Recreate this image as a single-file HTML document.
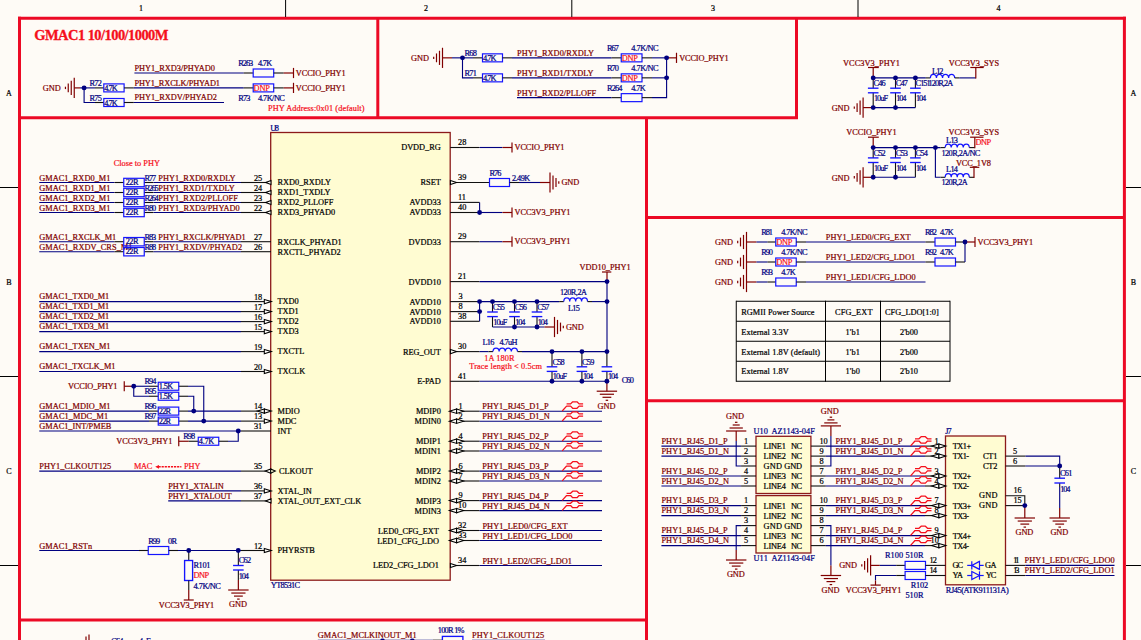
<!DOCTYPE html>
<html><head><meta charset="utf-8"><title>GMAC1 10/100/1000M schematic</title>
<style>
html,body{margin:0;padding:0;background:#fefbf6;}
body{width:1141px;height:640px;overflow:hidden;}
svg{display:block;font-family:"Liberation Serif",serif;font-size:8.3px;}
text{white-space:pre;}
</style></head><body>
<svg width="1141" height="640" viewBox="0 0 1141 640">
<rect x="0" y="0" width="1141" height="640" fill="#fefbf6"/>
<polyline points="18,18.3 1125.9,18.3" fill="none" stroke="#ec0a25" stroke-width="3" stroke-linecap="butt" stroke-linejoin="miter"/>
<polyline points="19.5,16.8 19.5,640" fill="none" stroke="#ec0a25" stroke-width="3" stroke-linecap="butt" stroke-linejoin="miter"/>
<polyline points="1124.4,16.8 1124.4,640" fill="none" stroke="#ec0a25" stroke-width="3" stroke-linecap="butt" stroke-linejoin="miter"/>
<polyline points="19.5,117.7 798,117.7" fill="none" stroke="#ec0a25" stroke-width="3" stroke-linecap="butt" stroke-linejoin="miter"/>
<polyline points="377.8,18.3 377.8,117.7" fill="none" stroke="#ec0a25" stroke-width="3" stroke-linecap="butt" stroke-linejoin="miter"/>
<polyline points="796.5,18.3 796.5,117.7" fill="none" stroke="#ec0a25" stroke-width="3" stroke-linecap="butt" stroke-linejoin="miter"/>
<polyline points="646.5,117.7 646.5,640" fill="none" stroke="#ec0a25" stroke-width="3" stroke-linecap="butt" stroke-linejoin="miter"/>
<polyline points="646.5,217.5 1124.4,217.5" fill="none" stroke="#ec0a25" stroke-width="3" stroke-linecap="butt" stroke-linejoin="miter"/>
<polyline points="646.5,400.8 1124.4,400.8" fill="none" stroke="#ec0a25" stroke-width="3" stroke-linecap="butt" stroke-linejoin="miter"/>
<polyline points="19.5,620 646.5,620" fill="none" stroke="#ec0a25" stroke-width="3" stroke-linecap="butt" stroke-linejoin="miter"/>
<polyline points="285.6,0 285.6,17" fill="none" stroke="#000000" stroke-width="1" stroke-linecap="butt" stroke-linejoin="miter"/>
<polyline points="571.8,0 571.8,17" fill="none" stroke="#000000" stroke-width="1" stroke-linecap="butt" stroke-linejoin="miter"/>
<polyline points="858,0 858,17" fill="none" stroke="#000000" stroke-width="1" stroke-linecap="butt" stroke-linejoin="miter"/>
<polyline points="0,187.5 18,187.5" fill="none" stroke="#000000" stroke-width="1" stroke-linecap="butt" stroke-linejoin="miter"/>
<polyline points="1126,187.5 1141,187.5" fill="none" stroke="#000000" stroke-width="1" stroke-linecap="butt" stroke-linejoin="miter"/>
<polyline points="0,376.5 18,376.5" fill="none" stroke="#000000" stroke-width="1" stroke-linecap="butt" stroke-linejoin="miter"/>
<polyline points="1126,376.5 1141,376.5" fill="none" stroke="#000000" stroke-width="1" stroke-linecap="butt" stroke-linejoin="miter"/>
<polyline points="0,565.5 18,565.5" fill="none" stroke="#000000" stroke-width="1" stroke-linecap="butt" stroke-linejoin="miter"/>
<polyline points="1126,565.5 1141,565.5" fill="none" stroke="#000000" stroke-width="1" stroke-linecap="butt" stroke-linejoin="miter"/>
<text x="141" y="11" fill="#000000" stroke="#000000" stroke-width="0.22" text-anchor="middle" font-size="8">1</text>
<text x="426" y="11" fill="#000000" stroke="#000000" stroke-width="0.22" text-anchor="middle" font-size="8">2</text>
<text x="713" y="11" fill="#000000" stroke="#000000" stroke-width="0.22" text-anchor="middle" font-size="8">3</text>
<text x="998.5" y="11" fill="#000000" stroke="#000000" stroke-width="0.22" text-anchor="middle" font-size="8">4</text>
<text x="9" y="96.3" fill="#000000" stroke="#000000" stroke-width="0.22" text-anchor="middle" font-size="8">A</text>
<text x="1133.5" y="96.3" fill="#000000" stroke="#000000" stroke-width="0.22" text-anchor="middle" font-size="8">A</text>
<text x="9" y="285" fill="#000000" stroke="#000000" stroke-width="0.22" text-anchor="middle" font-size="8">B</text>
<text x="1133.5" y="285" fill="#000000" stroke="#000000" stroke-width="0.22" text-anchor="middle" font-size="8">B</text>
<text x="9" y="474" fill="#000000" stroke="#000000" stroke-width="0.22" text-anchor="middle" font-size="8">C</text>
<text x="1133.5" y="474" fill="#000000" stroke="#000000" stroke-width="0.22" text-anchor="middle" font-size="8">C</text>
<text x="34.2" y="39.9" fill="#f5101c" stroke="#f5101c" stroke-width="0.3" textLength="134.3" lengthAdjust="spacing" font-weight="bold" font-size="14.5">GMAC1 10/100/1000M</text>
<text x="134.4" y="71" fill="#800000" stroke="#800000" stroke-width="0.22" textLength="80.6" lengthAdjust="spacing">PHY1_RXD3/PHYAD0</text>
<polyline points="134.4,73 243.7,73" fill="none" stroke="#000080" stroke-width="1.12" stroke-linecap="butt" stroke-linejoin="miter"/>
<polyline points="243.7,73 253.2,73" fill="none" stroke="#101010" stroke-width="1.1" stroke-linecap="butt" stroke-linejoin="miter"/>
<rect x="253.2" y="69" width="20.5" height="8" fill="none" stroke="#1414ff" stroke-width="1.2"/>
<polyline points="273.7,73 283.7,73" fill="none" stroke="#101010" stroke-width="1.1" stroke-linecap="butt" stroke-linejoin="miter"/>
<polyline points="283.7,73 293.5,73" fill="none" stroke="#800000" stroke-width="1.2" stroke-linecap="butt" stroke-linejoin="miter"/>
<polyline points="293.5,67.9 293.5,78.1" fill="none" stroke="#800000" stroke-width="1.2" stroke-linecap="butt" stroke-linejoin="miter"/>
<text x="295.8" y="75.6" fill="#800000" stroke="#800000" stroke-width="0.22" textLength="49.8" lengthAdjust="spacing">VCCIO_PHY1</text>
<text x="238.2" y="65.6" fill="#000080" stroke="#000080" stroke-width="0.22" textLength="15" lengthAdjust="spacing">R263</text>
<text x="257.9" y="65.6" fill="#000080" stroke="#000080" stroke-width="0.22" textLength="14.4" lengthAdjust="spacing">4.7K</text>
<polyline points="74.25,77.8 74.25,98" fill="none" stroke="#800000" stroke-width="1.2" stroke-linecap="butt" stroke-linejoin="miter"/>
<polyline points="71.25,80.8 71.25,95" fill="none" stroke="#800000" stroke-width="1.2" stroke-linecap="butt" stroke-linejoin="miter"/>
<polyline points="68.25,83.5 68.25,92.3" fill="none" stroke="#800000" stroke-width="1.2" stroke-linecap="butt" stroke-linejoin="miter"/>
<polyline points="65.45,86.7 65.45,89.1" fill="none" stroke="#800000" stroke-width="1.2" stroke-linecap="butt" stroke-linejoin="miter"/>
<text x="42.85" y="90.7" fill="#800000" stroke="#800000" stroke-width="0.22" textLength="17.8" lengthAdjust="spacing">GND</text>
<polyline points="74.25,87.9 80,87.9" fill="none" stroke="#800000" stroke-width="1.2" stroke-linecap="butt" stroke-linejoin="miter"/>
<polyline points="80,87.9 95,87.9" fill="none" stroke="#000080" stroke-width="1.12" stroke-linecap="butt" stroke-linejoin="miter"/>
<polyline points="95,87.9 103.8,87.9" fill="none" stroke="#101010" stroke-width="1.1" stroke-linecap="butt" stroke-linejoin="miter"/>
<rect x="103.8" y="83.9" width="20.3" height="8" fill="none" stroke="#1414ff" stroke-width="1.2"/>
<text x="104.3" y="91.1" fill="#000080" stroke="#000080" stroke-width="0.22" textLength="13.4" lengthAdjust="spacing">4.7K</text>
<polyline points="124.1,87.9 133.8,87.9" fill="none" stroke="#101010" stroke-width="1.1" stroke-linecap="butt" stroke-linejoin="miter"/>
<polyline points="133.8,87.9 243.7,87.9" fill="none" stroke="#000080" stroke-width="1.12" stroke-linecap="butt" stroke-linejoin="miter"/>
<polyline points="243.7,87.9 253.2,87.9" fill="none" stroke="#101010" stroke-width="1.1" stroke-linecap="butt" stroke-linejoin="miter"/>
<rect x="253.2" y="83.9" width="20.5" height="8" fill="none" stroke="#1414ff" stroke-width="1.2"/>
<text x="253.6" y="91.1" fill="#f5101c" stroke="#f5101c" stroke-width="0.22" textLength="16.2" lengthAdjust="spacing">DNP</text>
<polyline points="273.7,87.9 283.7,87.9" fill="none" stroke="#101010" stroke-width="1.1" stroke-linecap="butt" stroke-linejoin="miter"/>
<polyline points="283.7,87.9 293.5,87.9" fill="none" stroke="#800000" stroke-width="1.2" stroke-linecap="butt" stroke-linejoin="miter"/>
<polyline points="293.5,82.8 293.5,93" fill="none" stroke="#800000" stroke-width="1.2" stroke-linecap="butt" stroke-linejoin="miter"/>
<text x="295.8" y="90.5" fill="#800000" stroke="#800000" stroke-width="0.22" textLength="49.8" lengthAdjust="spacing">VCCIO_PHY1</text>
<text x="89.4" y="86" fill="#000080" stroke="#000080" stroke-width="0.22" textLength="12.5" lengthAdjust="spacing">R72</text>
<text x="134.4" y="86" fill="#800000" stroke="#800000" stroke-width="0.22" textLength="85.6" lengthAdjust="spacing">PHY1_RXCLK/PHYAD1</text>
<polyline points="84.1,87.9 84.1,102.5 95,102.5" fill="none" stroke="#000080" stroke-width="1.12" stroke-linecap="butt" stroke-linejoin="miter"/>
<polyline points="95,102.5 103.8,102.5" fill="none" stroke="#101010" stroke-width="1.1" stroke-linecap="butt" stroke-linejoin="miter"/>
<rect x="103.8" y="98.5" width="20.3" height="8" fill="none" stroke="#1414ff" stroke-width="1.2"/>
<text x="104.3" y="105.7" fill="#000080" stroke="#000080" stroke-width="0.22" textLength="13.4" lengthAdjust="spacing">4.7K</text>
<polyline points="124.1,102.5 133.8,102.5" fill="none" stroke="#101010" stroke-width="1.1" stroke-linecap="butt" stroke-linejoin="miter"/>
<polyline points="133.8,102.5 224,102.5" fill="none" stroke="#000080" stroke-width="1.12" stroke-linecap="butt" stroke-linejoin="miter"/>
<text x="89.4" y="100.6" fill="#000080" stroke="#000080" stroke-width="0.22" textLength="12.5" lengthAdjust="spacing">R75</text>
<text x="134.4" y="100.4" fill="#800000" stroke="#800000" stroke-width="0.22" textLength="82.4" lengthAdjust="spacing">PHY1_RXDV/PHYAD2</text>
<text x="238.2" y="101" fill="#000080" stroke="#000080" stroke-width="0.22" textLength="12.3" lengthAdjust="spacing">R73</text>
<text x="257.9" y="101" fill="#000080" stroke="#000080" stroke-width="0.22" textLength="27" lengthAdjust="spacing">4.7K/NC</text>
<text x="268" y="110.6" fill="#f5101c" stroke="#f5101c" stroke-width="0.22" textLength="96.5" lengthAdjust="spacing">PHY Address:0x01 (default)</text>
<polyline points="442.5,47.75 442.5,67.95" fill="none" stroke="#800000" stroke-width="1.2" stroke-linecap="butt" stroke-linejoin="miter"/>
<polyline points="439.5,50.75 439.5,64.95" fill="none" stroke="#800000" stroke-width="1.2" stroke-linecap="butt" stroke-linejoin="miter"/>
<polyline points="436.5,53.45 436.5,62.25" fill="none" stroke="#800000" stroke-width="1.2" stroke-linecap="butt" stroke-linejoin="miter"/>
<polyline points="433.7,56.65 433.7,59.05" fill="none" stroke="#800000" stroke-width="1.2" stroke-linecap="butt" stroke-linejoin="miter"/>
<text x="411.1" y="60.65" fill="#800000" stroke="#800000" stroke-width="0.22" textLength="17.8" lengthAdjust="spacing">GND</text>
<polyline points="442.5,57.85 452,57.85" fill="none" stroke="#800000" stroke-width="1.2" stroke-linecap="butt" stroke-linejoin="miter"/>
<polyline points="452,57.85 473,57.85" fill="none" stroke="#000080" stroke-width="1.12" stroke-linecap="butt" stroke-linejoin="miter"/>
<polyline points="473,57.85 482.5,57.85" fill="none" stroke="#101010" stroke-width="1.1" stroke-linecap="butt" stroke-linejoin="miter"/>
<rect x="482.5" y="53.85" width="20" height="8" fill="none" stroke="#1414ff" stroke-width="1.2"/>
<text x="483" y="61.05" fill="#000080" stroke="#000080" stroke-width="0.22" textLength="13.4" lengthAdjust="spacing">4.7K</text>
<polyline points="502.5,57.85 512,57.85" fill="none" stroke="#101010" stroke-width="1.1" stroke-linecap="butt" stroke-linejoin="miter"/>
<polyline points="512,57.85 611.6,57.85" fill="none" stroke="#000080" stroke-width="1.12" stroke-linecap="butt" stroke-linejoin="miter"/>
<polyline points="611.6,57.85 621.25,57.85" fill="none" stroke="#101010" stroke-width="1.1" stroke-linecap="butt" stroke-linejoin="miter"/>
<rect x="621.25" y="53.85" width="20.75" height="8" fill="none" stroke="#1414ff" stroke-width="1.2"/>
<text x="621.65" y="61.05" fill="#f5101c" stroke="#f5101c" stroke-width="0.22" textLength="16.2" lengthAdjust="spacing">DNP</text>
<polyline points="642,57.85 652,57.85" fill="none" stroke="#101010" stroke-width="1.1" stroke-linecap="butt" stroke-linejoin="miter"/>
<polyline points="652,57.85 666.6,57.85" fill="none" stroke="#000080" stroke-width="1.12" stroke-linecap="butt" stroke-linejoin="miter"/>
<text x="464.5" y="55.9" fill="#000080" stroke="#000080" stroke-width="0.22" textLength="12.5" lengthAdjust="spacing">R68</text>
<polyline points="473,77.85 482.5,77.85" fill="none" stroke="#101010" stroke-width="1.1" stroke-linecap="butt" stroke-linejoin="miter"/>
<rect x="482.5" y="73.85" width="20" height="8" fill="none" stroke="#1414ff" stroke-width="1.2"/>
<text x="483" y="81.05" fill="#000080" stroke="#000080" stroke-width="0.22" textLength="13.4" lengthAdjust="spacing">4.7K</text>
<polyline points="502.5,77.85 512,77.85" fill="none" stroke="#101010" stroke-width="1.1" stroke-linecap="butt" stroke-linejoin="miter"/>
<polyline points="512,77.85 611.6,77.85" fill="none" stroke="#000080" stroke-width="1.12" stroke-linecap="butt" stroke-linejoin="miter"/>
<polyline points="611.6,77.85 621.25,77.85" fill="none" stroke="#101010" stroke-width="1.1" stroke-linecap="butt" stroke-linejoin="miter"/>
<rect x="621.25" y="73.85" width="20.75" height="8" fill="none" stroke="#1414ff" stroke-width="1.2"/>
<text x="621.65" y="81.05" fill="#f5101c" stroke="#f5101c" stroke-width="0.22" textLength="16.2" lengthAdjust="spacing">DNP</text>
<polyline points="642,77.85 652,77.85" fill="none" stroke="#101010" stroke-width="1.1" stroke-linecap="butt" stroke-linejoin="miter"/>
<polyline points="652,77.85 666.6,77.85" fill="none" stroke="#000080" stroke-width="1.12" stroke-linecap="butt" stroke-linejoin="miter"/>
<text x="464.5" y="75.9" fill="#000080" stroke="#000080" stroke-width="0.22" textLength="12.5" lengthAdjust="spacing">R71</text>
<polyline points="462.5,57.85 462.5,77.85 473,77.85" fill="none" stroke="#000080" stroke-width="1.12" stroke-linecap="butt" stroke-linejoin="miter"/>
<polyline points="517,97.65 611.6,97.65" fill="none" stroke="#000080" stroke-width="1.12" stroke-linecap="butt" stroke-linejoin="miter"/>
<polyline points="611.6,97.65 621.25,97.65" fill="none" stroke="#101010" stroke-width="1.1" stroke-linecap="butt" stroke-linejoin="miter"/>
<rect x="621.25" y="93.65" width="20.75" height="8" fill="none" stroke="#1414ff" stroke-width="1.2"/>
<polyline points="642,97.65 652,97.65" fill="none" stroke="#101010" stroke-width="1.1" stroke-linecap="butt" stroke-linejoin="miter"/>
<polyline points="652,97.65 666.6,97.65 666.6,57.85" fill="none" stroke="#000080" stroke-width="1.12" stroke-linecap="butt" stroke-linejoin="miter"/>
<polyline points="666.6,57.85 676.5,57.85" fill="none" stroke="#800000" stroke-width="1.2" stroke-linecap="butt" stroke-linejoin="miter"/>
<polyline points="676.5,52.75 676.5,62.95" fill="none" stroke="#800000" stroke-width="1.2" stroke-linecap="butt" stroke-linejoin="miter"/>
<text x="679.2" y="60.6" fill="#800000" stroke="#800000" stroke-width="0.22" textLength="49.5" lengthAdjust="spacing">VCCIO_PHY1</text>
<text x="517" y="55.6" fill="#800000" stroke="#800000" stroke-width="0.22" textLength="77" lengthAdjust="spacing">PHY1_RXD0/RXDLY</text>
<text x="517" y="75.6" fill="#800000" stroke="#800000" stroke-width="0.22" textLength="76.5" lengthAdjust="spacing">PHY1_RXD1/TXDLY</text>
<text x="517" y="95.6" fill="#800000" stroke="#800000" stroke-width="0.22" textLength="79.2" lengthAdjust="spacing">PHY1_RXD2/PLLOFF</text>
<text x="607" y="50.6" fill="#000080" stroke="#000080" stroke-width="0.22" textLength="11.8" lengthAdjust="spacing">R67</text>
<text x="631.2" y="50.6" fill="#000080" stroke="#000080" stroke-width="0.22" textLength="27.4" lengthAdjust="spacing">4.7K/NC</text>
<text x="607" y="70.6" fill="#000080" stroke="#000080" stroke-width="0.22" textLength="11.8" lengthAdjust="spacing">R70</text>
<text x="631.2" y="70.6" fill="#000080" stroke="#000080" stroke-width="0.22" textLength="27.4" lengthAdjust="spacing">4.7K/NC</text>
<text x="607" y="90.6" fill="#000080" stroke="#000080" stroke-width="0.22" textLength="15.4" lengthAdjust="spacing">R264</text>
<text x="631.2" y="90.6" fill="#000080" stroke="#000080" stroke-width="0.22" textLength="14.6" lengthAdjust="spacing">4.7K</text>
<text x="843" y="65.8" fill="#800000" stroke="#800000" stroke-width="0.22" textLength="57" lengthAdjust="spacing">VCC3V3_PHY1</text>
<polyline points="868,67.5 878.8,67.5" fill="none" stroke="#800000" stroke-width="1.2" stroke-linecap="butt" stroke-linejoin="miter"/>
<polyline points="873.2,67.5 873.2,77.9" fill="none" stroke="#800000" stroke-width="1.2" stroke-linecap="butt" stroke-linejoin="miter"/>
<polyline points="873.2,77.9 925.8,77.9" fill="none" stroke="#000080" stroke-width="1.12" stroke-linecap="butt" stroke-linejoin="miter"/>
<polyline points="873.2,77.9 873.2,88.2" fill="none" stroke="#101010" stroke-width="1.1" stroke-linecap="butt" stroke-linejoin="miter"/>
<polyline points="873.2,92.8 873.2,107.6" fill="none" stroke="#101010" stroke-width="1.1" stroke-linecap="butt" stroke-linejoin="miter"/>
<polyline points="867.9,88.2 878.5,88.2" fill="none" stroke="#1414ff" stroke-width="1.35" stroke-linecap="butt" stroke-linejoin="miter"/>
<polyline points="867.9,92.8 878.5,92.8" fill="none" stroke="#1414ff" stroke-width="1.35" stroke-linecap="butt" stroke-linejoin="miter"/>
<polyline points="895.5,77.9 895.5,88.2" fill="none" stroke="#101010" stroke-width="1.1" stroke-linecap="butt" stroke-linejoin="miter"/>
<polyline points="895.5,92.8 895.5,107.6" fill="none" stroke="#101010" stroke-width="1.1" stroke-linecap="butt" stroke-linejoin="miter"/>
<polyline points="890.2,88.2 900.8,88.2" fill="none" stroke="#1414ff" stroke-width="1.35" stroke-linecap="butt" stroke-linejoin="miter"/>
<polyline points="890.2,92.8 900.8,92.8" fill="none" stroke="#1414ff" stroke-width="1.35" stroke-linecap="butt" stroke-linejoin="miter"/>
<polyline points="915.4,77.9 915.4,88.2" fill="none" stroke="#101010" stroke-width="1.1" stroke-linecap="butt" stroke-linejoin="miter"/>
<polyline points="915.4,92.8 915.4,107.6" fill="none" stroke="#101010" stroke-width="1.1" stroke-linecap="butt" stroke-linejoin="miter"/>
<polyline points="910.1,88.2 920.7,88.2" fill="none" stroke="#1414ff" stroke-width="1.35" stroke-linecap="butt" stroke-linejoin="miter"/>
<polyline points="910.1,92.8 920.7,92.8" fill="none" stroke="#1414ff" stroke-width="1.35" stroke-linecap="butt" stroke-linejoin="miter"/>
<polyline points="873.2,107.6 915.4,107.6" fill="none" stroke="#000080" stroke-width="1.12" stroke-linecap="butt" stroke-linejoin="miter"/>
<polyline points="863.1,107.6 873.2,107.6" fill="none" stroke="#800000" stroke-width="1.2" stroke-linecap="butt" stroke-linejoin="miter"/>
<polyline points="863.1,97.5 863.1,117.7" fill="none" stroke="#800000" stroke-width="1.2" stroke-linecap="butt" stroke-linejoin="miter"/>
<polyline points="860.1,100.5 860.1,114.7" fill="none" stroke="#800000" stroke-width="1.2" stroke-linecap="butt" stroke-linejoin="miter"/>
<polyline points="857.1,103.2 857.1,112" fill="none" stroke="#800000" stroke-width="1.2" stroke-linecap="butt" stroke-linejoin="miter"/>
<polyline points="854.3,106.4 854.3,108.8" fill="none" stroke="#800000" stroke-width="1.2" stroke-linecap="butt" stroke-linejoin="miter"/>
<text x="831.7" y="110.5" fill="#800000" stroke="#800000" stroke-width="0.22" textLength="17.8" lengthAdjust="spacing">GND</text>
<text x="873.4" y="85.8" fill="#000080" stroke="#000080" stroke-width="0.22" textLength="12.3" lengthAdjust="spacing">C46</text>
<text x="895.7" y="85.8" fill="#000080" stroke="#000080" stroke-width="0.22" textLength="12.3" lengthAdjust="spacing">C47</text>
<text x="915.6" y="85.8" fill="#000080" stroke="#000080" stroke-width="0.22" textLength="15" lengthAdjust="spacing">C151</text>
<text x="873.9" y="100.7" fill="#000080" stroke="#000080" stroke-width="0.22" textLength="14.2" lengthAdjust="spacing">10uF</text>
<text x="896.2" y="100.7" fill="#000080" stroke="#000080" stroke-width="0.22" textLength="10.1" lengthAdjust="spacing">104</text>
<text x="916.1" y="100.7" fill="#000080" stroke="#000080" stroke-width="0.22" textLength="10.1" lengthAdjust="spacing">104</text>
<text x="846.3" y="134.6" fill="#800000" stroke="#800000" stroke-width="0.22" textLength="50.3" lengthAdjust="spacing">VCCIO_PHY1</text>
<polyline points="868,137.2 878.8,137.2" fill="none" stroke="#800000" stroke-width="1.2" stroke-linecap="butt" stroke-linejoin="miter"/>
<polyline points="873.2,137.2 873.2,147.6" fill="none" stroke="#800000" stroke-width="1.2" stroke-linecap="butt" stroke-linejoin="miter"/>
<polyline points="873.2,147.6 940.6,147.6" fill="none" stroke="#000080" stroke-width="1.12" stroke-linecap="butt" stroke-linejoin="miter"/>
<polyline points="873.2,147.6 873.2,157.9" fill="none" stroke="#101010" stroke-width="1.1" stroke-linecap="butt" stroke-linejoin="miter"/>
<polyline points="873.2,162.5 873.2,177.3" fill="none" stroke="#101010" stroke-width="1.1" stroke-linecap="butt" stroke-linejoin="miter"/>
<polyline points="867.9,157.9 878.5,157.9" fill="none" stroke="#1414ff" stroke-width="1.35" stroke-linecap="butt" stroke-linejoin="miter"/>
<polyline points="867.9,162.5 878.5,162.5" fill="none" stroke="#1414ff" stroke-width="1.35" stroke-linecap="butt" stroke-linejoin="miter"/>
<polyline points="895.5,147.6 895.5,157.9" fill="none" stroke="#101010" stroke-width="1.1" stroke-linecap="butt" stroke-linejoin="miter"/>
<polyline points="895.5,162.5 895.5,177.3" fill="none" stroke="#101010" stroke-width="1.1" stroke-linecap="butt" stroke-linejoin="miter"/>
<polyline points="890.2,157.9 900.8,157.9" fill="none" stroke="#1414ff" stroke-width="1.35" stroke-linecap="butt" stroke-linejoin="miter"/>
<polyline points="890.2,162.5 900.8,162.5" fill="none" stroke="#1414ff" stroke-width="1.35" stroke-linecap="butt" stroke-linejoin="miter"/>
<polyline points="915.4,147.6 915.4,157.9" fill="none" stroke="#101010" stroke-width="1.1" stroke-linecap="butt" stroke-linejoin="miter"/>
<polyline points="915.4,162.5 915.4,177.3" fill="none" stroke="#101010" stroke-width="1.1" stroke-linecap="butt" stroke-linejoin="miter"/>
<polyline points="910.1,157.9 920.7,157.9" fill="none" stroke="#1414ff" stroke-width="1.35" stroke-linecap="butt" stroke-linejoin="miter"/>
<polyline points="910.1,162.5 920.7,162.5" fill="none" stroke="#1414ff" stroke-width="1.35" stroke-linecap="butt" stroke-linejoin="miter"/>
<polyline points="873.2,177.3 915.4,177.3" fill="none" stroke="#000080" stroke-width="1.12" stroke-linecap="butt" stroke-linejoin="miter"/>
<polyline points="863.1,177.3 873.2,177.3" fill="none" stroke="#800000" stroke-width="1.2" stroke-linecap="butt" stroke-linejoin="miter"/>
<polyline points="863.1,167.2 863.1,187.4" fill="none" stroke="#800000" stroke-width="1.2" stroke-linecap="butt" stroke-linejoin="miter"/>
<polyline points="860.1,170.2 860.1,184.4" fill="none" stroke="#800000" stroke-width="1.2" stroke-linecap="butt" stroke-linejoin="miter"/>
<polyline points="857.1,172.9 857.1,181.7" fill="none" stroke="#800000" stroke-width="1.2" stroke-linecap="butt" stroke-linejoin="miter"/>
<polyline points="854.3,176.1 854.3,178.5" fill="none" stroke="#800000" stroke-width="1.2" stroke-linecap="butt" stroke-linejoin="miter"/>
<text x="831.7" y="180.7" fill="#800000" stroke="#800000" stroke-width="0.22" textLength="17.8" lengthAdjust="spacing">GND</text>
<text x="873.4" y="155.5" fill="#000080" stroke="#000080" stroke-width="0.22" textLength="12.3" lengthAdjust="spacing">C52</text>
<text x="895.7" y="155.5" fill="#000080" stroke="#000080" stroke-width="0.22" textLength="12.3" lengthAdjust="spacing">C53</text>
<text x="915.6" y="155.5" fill="#000080" stroke="#000080" stroke-width="0.22" textLength="12.3" lengthAdjust="spacing">C54</text>
<text x="873.9" y="171.1" fill="#000080" stroke="#000080" stroke-width="0.22" textLength="14.2" lengthAdjust="spacing">10uF</text>
<text x="896.2" y="171.1" fill="#000080" stroke="#000080" stroke-width="0.22" textLength="10.1" lengthAdjust="spacing">104</text>
<text x="916.1" y="171.1" fill="#000080" stroke="#000080" stroke-width="0.22" textLength="10.1" lengthAdjust="spacing">104</text>
<polyline points="925.8,77.9 930.4,77.9" fill="none" stroke="#101010" stroke-width="1.1" stroke-linecap="butt" stroke-linejoin="miter"/>
<path d="M930.4,77.9 a3.04,3.6 0 0 1 6.08,0 a3.04,3.6 0 0 1 6.08,0 a3.04,3.6 0 0 1 6.08,0 a3.04,3.6 0 0 1 6.08,0" fill="none" stroke="#1414ff" stroke-width="1.25"/>
<polyline points="954.7,77.9 959.3,77.9" fill="none" stroke="#101010" stroke-width="1.1" stroke-linecap="butt" stroke-linejoin="miter"/>
<polyline points="959.3,77.9 975.8,77.9" fill="none" stroke="#000080" stroke-width="1.12" stroke-linecap="butt" stroke-linejoin="miter"/>
<polyline points="975.8,78.5 975.8,67.5" fill="none" stroke="#800000" stroke-width="1.2" stroke-linecap="butt" stroke-linejoin="miter"/>
<polyline points="970.3,67.5 983.7,67.5" fill="none" stroke="#800000" stroke-width="1.2" stroke-linecap="butt" stroke-linejoin="miter"/>
<text x="948.8" y="65.8" fill="#800000" stroke="#800000" stroke-width="0.22" textLength="50.4" lengthAdjust="spacing">VCC3V3_SYS</text>
<text x="932.1" y="74" fill="#000080" stroke="#000080" stroke-width="0.22" textLength="11.4" lengthAdjust="spacing">L12</text>
<text x="928.4" y="85.8" fill="#000080" stroke="#000080" stroke-width="0.22" textLength="24.8" lengthAdjust="spacing">120R,2A</text>
<polyline points="940.6,147.6 945.2,147.6" fill="none" stroke="#101010" stroke-width="1.1" stroke-linecap="butt" stroke-linejoin="miter"/>
<path d="M945.2,147.6 a3.01,3.6 0 0 1 6.02,0 a3.01,3.6 0 0 1 6.02,0 a3.01,3.6 0 0 1 6.02,0 a3.01,3.6 0 0 1 6.02,0" fill="none" stroke="#1414ff" stroke-width="1.25"/>
<polyline points="969.3,147.6 974.8,147.6" fill="none" stroke="#101010" stroke-width="1.1" stroke-linecap="butt" stroke-linejoin="miter"/>
<polyline points="974.8,148.2 974.8,137.2" fill="none" stroke="#800000" stroke-width="1.2" stroke-linecap="butt" stroke-linejoin="miter"/>
<polyline points="970.1,137.2 983.5,137.2" fill="none" stroke="#800000" stroke-width="1.2" stroke-linecap="butt" stroke-linejoin="miter"/>
<text x="948.5" y="134.8" fill="#800000" stroke="#800000" stroke-width="0.22" textLength="50.6" lengthAdjust="spacing">VCC3V3_SYS</text>
<text x="946.1" y="142.5" fill="#000080" stroke="#000080" stroke-width="0.22" textLength="11.8" lengthAdjust="spacing">L13</text>
<text x="941.4" y="155.5" fill="#000080" stroke="#000080" stroke-width="0.22" textLength="39" lengthAdjust="spacing">120R,2A/NC</text>
<text x="975.6" y="144.8" fill="#f5101c" stroke="#f5101c" stroke-width="0.22" textLength="15.5" lengthAdjust="spacing">DNP</text>
<polyline points="935.4,147.6 935.4,177.3 940.6,177.3" fill="none" stroke="#000080" stroke-width="1.12" stroke-linecap="butt" stroke-linejoin="miter"/>
<polyline points="940.6,177.3 945.2,177.3" fill="none" stroke="#101010" stroke-width="1.1" stroke-linecap="butt" stroke-linejoin="miter"/>
<path d="M945.2,177.3 a3.01,3.6 0 0 1 6.02,0 a3.01,3.6 0 0 1 6.02,0 a3.01,3.6 0 0 1 6.02,0 a3.01,3.6 0 0 1 6.02,0" fill="none" stroke="#1414ff" stroke-width="1.25"/>
<polyline points="969.3,177.3 974,177.3" fill="none" stroke="#101010" stroke-width="1.1" stroke-linecap="butt" stroke-linejoin="miter"/>
<polyline points="974,177.9 974,167.3" fill="none" stroke="#800000" stroke-width="1.2" stroke-linecap="butt" stroke-linejoin="miter"/>
<polyline points="969.8,167.3 979.3,167.3" fill="none" stroke="#800000" stroke-width="1.2" stroke-linecap="butt" stroke-linejoin="miter"/>
<text x="955.9" y="165.7" fill="#800000" stroke="#800000" stroke-width="0.22" textLength="35.1" lengthAdjust="spacing">VCC_1V8</text>
<text x="946.1" y="172.2" fill="#000080" stroke="#000080" stroke-width="0.22" textLength="11.8" lengthAdjust="spacing">L14</text>
<text x="941.4" y="184.8" fill="#000080" stroke="#000080" stroke-width="0.22" textLength="26.3" lengthAdjust="spacing">120R,2A</text>
<rect x="270.7" y="132.5" width="179.5" height="447.7" fill="#fffcd2" stroke="#8c1a1a" stroke-width="1.3"/>
<text x="270.3" y="130.7" fill="#000080" stroke="#000080" stroke-width="0.22" textLength="8.6" lengthAdjust="spacing">U8</text>
<text x="270.8" y="588" fill="#000080" stroke="#000080" stroke-width="0.22" textLength="29.2" lengthAdjust="spacing">YT8531C</text>
<text x="113.75" y="165.5" fill="#f5101c" stroke="#f5101c" stroke-width="0.22" textLength="46.2" lengthAdjust="spacing">Close to PHY</text>
<text x="39.25" y="180.5" fill="#800000" stroke="#800000" stroke-width="0.22" textLength="71.2" lengthAdjust="spacing">GMAC1_RXD0_M1</text>
<polyline points="39.25,182.5 114.5,182.5" fill="none" stroke="#000080" stroke-width="1.12" stroke-linecap="butt" stroke-linejoin="miter"/>
<polyline points="114.5,182.5 123.75,182.5" fill="none" stroke="#101010" stroke-width="1.1" stroke-linecap="butt" stroke-linejoin="miter"/>
<polyline points="144.25,182.5 153.5,182.5" fill="none" stroke="#101010" stroke-width="1.1" stroke-linecap="butt" stroke-linejoin="miter"/>
<polyline points="153.5,182.5 241,182.5" fill="none" stroke="#000080" stroke-width="1.12" stroke-linecap="butt" stroke-linejoin="miter"/>
<text x="144.6" y="180.5" fill="#000080" stroke="#000080" stroke-width="0.22" textLength="11.5" lengthAdjust="spacing">R77</text>
<text x="158.25" y="180.5" fill="#800000" stroke="#800000" stroke-width="0.22" textLength="77.2" lengthAdjust="spacing">PHY1_RXD0/RXDLY</text>
<polyline points="241,182.5 271,182.5" fill="none" stroke="#101010" stroke-width="1.1" stroke-linecap="butt" stroke-linejoin="miter"/>
<text x="262.2" y="180.6" fill="#000000" stroke="#000000" stroke-width="0.22" text-anchor="end">25</text>
<text x="277.5" y="185.3" fill="#000000" stroke="#000000" stroke-width="0.22">RXD0_RXDLY</text>
<polygon points="271,180.4 265.6,182.5 271,184.6" fill="#fefbf6" stroke="#000000" stroke-width="1.05" stroke-linejoin="miter"/>
<text x="39.25" y="190.5" fill="#800000" stroke="#800000" stroke-width="0.22" textLength="71.2" lengthAdjust="spacing">GMAC1_RXD1_M1</text>
<polyline points="39.25,192.5 114.5,192.5" fill="none" stroke="#000080" stroke-width="1.12" stroke-linecap="butt" stroke-linejoin="miter"/>
<polyline points="114.5,192.5 123.75,192.5" fill="none" stroke="#101010" stroke-width="1.1" stroke-linecap="butt" stroke-linejoin="miter"/>
<polyline points="144.25,192.5 153.5,192.5" fill="none" stroke="#101010" stroke-width="1.1" stroke-linecap="butt" stroke-linejoin="miter"/>
<polyline points="153.5,192.5 241,192.5" fill="none" stroke="#000080" stroke-width="1.12" stroke-linecap="butt" stroke-linejoin="miter"/>
<text x="144.6" y="190.5" fill="#000080" stroke="#000080" stroke-width="0.22" textLength="14" lengthAdjust="spacing">R265</text>
<text x="158.25" y="190.5" fill="#800000" stroke="#800000" stroke-width="0.22" textLength="76.5" lengthAdjust="spacing">PHY1_RXD1/TXDLY</text>
<polyline points="241,192.5 271,192.5" fill="none" stroke="#101010" stroke-width="1.1" stroke-linecap="butt" stroke-linejoin="miter"/>
<text x="262.2" y="190.6" fill="#000000" stroke="#000000" stroke-width="0.22" text-anchor="end">24</text>
<text x="277.5" y="195.3" fill="#000000" stroke="#000000" stroke-width="0.22">RXD1_TXDLY</text>
<polygon points="271,190.4 265.6,192.5 271,194.6" fill="#fefbf6" stroke="#000000" stroke-width="1.05" stroke-linejoin="miter"/>
<text x="39.25" y="200.5" fill="#800000" stroke="#800000" stroke-width="0.22" textLength="71.2" lengthAdjust="spacing">GMAC1_RXD2_M1</text>
<polyline points="39.25,202.5 114.5,202.5" fill="none" stroke="#000080" stroke-width="1.12" stroke-linecap="butt" stroke-linejoin="miter"/>
<polyline points="114.5,202.5 123.75,202.5" fill="none" stroke="#101010" stroke-width="1.1" stroke-linecap="butt" stroke-linejoin="miter"/>
<polyline points="144.25,202.5 153.5,202.5" fill="none" stroke="#101010" stroke-width="1.1" stroke-linecap="butt" stroke-linejoin="miter"/>
<polyline points="153.5,202.5 241,202.5" fill="none" stroke="#000080" stroke-width="1.12" stroke-linecap="butt" stroke-linejoin="miter"/>
<text x="144.6" y="200.5" fill="#000080" stroke="#000080" stroke-width="0.22" textLength="14" lengthAdjust="spacing">R264</text>
<text x="158.25" y="200.5" fill="#800000" stroke="#800000" stroke-width="0.22" textLength="79.5" lengthAdjust="spacing">PHY1_RXD2/PLLOFF</text>
<polyline points="241,202.5 271,202.5" fill="none" stroke="#101010" stroke-width="1.1" stroke-linecap="butt" stroke-linejoin="miter"/>
<text x="262.2" y="200.6" fill="#000000" stroke="#000000" stroke-width="0.22" text-anchor="end">23</text>
<text x="277.5" y="205.3" fill="#000000" stroke="#000000" stroke-width="0.22">RXD2_PLLOFF</text>
<polygon points="271,200.4 265.6,202.5 271,204.6" fill="#fefbf6" stroke="#000000" stroke-width="1.05" stroke-linejoin="miter"/>
<text x="39.25" y="210.5" fill="#800000" stroke="#800000" stroke-width="0.22" textLength="71.2" lengthAdjust="spacing">GMAC1_RXD3_M1</text>
<polyline points="39.25,212.5 114.5,212.5" fill="none" stroke="#000080" stroke-width="1.12" stroke-linecap="butt" stroke-linejoin="miter"/>
<polyline points="114.5,212.5 123.75,212.5" fill="none" stroke="#101010" stroke-width="1.1" stroke-linecap="butt" stroke-linejoin="miter"/>
<polyline points="144.25,212.5 153.5,212.5" fill="none" stroke="#101010" stroke-width="1.1" stroke-linecap="butt" stroke-linejoin="miter"/>
<polyline points="153.5,212.5 241,212.5" fill="none" stroke="#000080" stroke-width="1.12" stroke-linecap="butt" stroke-linejoin="miter"/>
<text x="144.6" y="210.5" fill="#000080" stroke="#000080" stroke-width="0.22" textLength="11.5" lengthAdjust="spacing">R80</text>
<text x="158.25" y="210.5" fill="#800000" stroke="#800000" stroke-width="0.22" textLength="81.5" lengthAdjust="spacing">PHY1_RXD3/PHYAD0</text>
<polyline points="241,212.5 271,212.5" fill="none" stroke="#101010" stroke-width="1.1" stroke-linecap="butt" stroke-linejoin="miter"/>
<text x="262.2" y="210.6" fill="#000000" stroke="#000000" stroke-width="0.22" text-anchor="end">22</text>
<text x="277.5" y="215.3" fill="#000000" stroke="#000000" stroke-width="0.22">RXD3_PHYAD0</text>
<polygon points="271,210.4 265.6,212.5 271,214.6" fill="#fefbf6" stroke="#000000" stroke-width="1.05" stroke-linejoin="miter"/>
<text x="39.25" y="239.7" fill="#800000" stroke="#800000" stroke-width="0.22" textLength="77" lengthAdjust="spacing">GMAC1_RXCLK_M1</text>
<polyline points="39.25,241.7 114.5,241.7" fill="none" stroke="#000080" stroke-width="1.12" stroke-linecap="butt" stroke-linejoin="miter"/>
<polyline points="114.5,241.7 123.75,241.7" fill="none" stroke="#101010" stroke-width="1.1" stroke-linecap="butt" stroke-linejoin="miter"/>
<polyline points="144.25,241.7 153.5,241.7" fill="none" stroke="#101010" stroke-width="1.1" stroke-linecap="butt" stroke-linejoin="miter"/>
<polyline points="153.5,241.7 241,241.7" fill="none" stroke="#000080" stroke-width="1.12" stroke-linecap="butt" stroke-linejoin="miter"/>
<text x="144.6" y="239.7" fill="#000080" stroke="#000080" stroke-width="0.22" textLength="11.5" lengthAdjust="spacing">R83</text>
<text x="158.25" y="239.7" fill="#800000" stroke="#800000" stroke-width="0.22" textLength="87.5" lengthAdjust="spacing">PHY1_RXCLK/PHYAD1</text>
<polyline points="241,241.7 271,241.7" fill="none" stroke="#101010" stroke-width="1.1" stroke-linecap="butt" stroke-linejoin="miter"/>
<text x="262.2" y="239.8" fill="#000000" stroke="#000000" stroke-width="0.22" text-anchor="end">27</text>
<text x="277.5" y="244.5" fill="#000000" stroke="#000000" stroke-width="0.22">RXCLK_PHYAD1</text>
<text x="39.25" y="249.7" fill="#800000" stroke="#800000" stroke-width="0.22" textLength="93.2" lengthAdjust="spacing">GMAC1_RXDV_CRS_M1</text>
<polyline points="39.25,251.7 114.5,251.7" fill="none" stroke="#000080" stroke-width="1.12" stroke-linecap="butt" stroke-linejoin="miter"/>
<polyline points="114.5,251.7 123.75,251.7" fill="none" stroke="#101010" stroke-width="1.1" stroke-linecap="butt" stroke-linejoin="miter"/>
<polyline points="144.25,251.7 153.5,251.7" fill="none" stroke="#101010" stroke-width="1.1" stroke-linecap="butt" stroke-linejoin="miter"/>
<polyline points="153.5,251.7 241,251.7" fill="none" stroke="#000080" stroke-width="1.12" stroke-linecap="butt" stroke-linejoin="miter"/>
<text x="144.6" y="249.7" fill="#000080" stroke="#000080" stroke-width="0.22" textLength="11.5" lengthAdjust="spacing">R88</text>
<text x="158.25" y="249.7" fill="#800000" stroke="#800000" stroke-width="0.22" textLength="83.8" lengthAdjust="spacing">PHY1_RXDV/PHYAD2</text>
<polyline points="241,251.7 271,251.7" fill="none" stroke="#101010" stroke-width="1.1" stroke-linecap="butt" stroke-linejoin="miter"/>
<text x="262.2" y="249.8" fill="#000000" stroke="#000000" stroke-width="0.22" text-anchor="end">26</text>
<text x="277.5" y="254.5" fill="#000000" stroke="#000000" stroke-width="0.22">RXCTL_PHYAD2</text>
<rect x="123.75" y="178.3" width="20.5" height="8.4" fill="none" stroke="#1414ff" stroke-width="1.2"/>
<text x="125.7" y="185.1" fill="#000080" stroke="#000080" stroke-width="0.22" textLength="12.8" lengthAdjust="spacing">22R</text>
<rect x="123.75" y="188.3" width="20.5" height="8.4" fill="none" stroke="#1414ff" stroke-width="1.2"/>
<text x="125.7" y="195.1" fill="#000080" stroke="#000080" stroke-width="0.22" textLength="12.8" lengthAdjust="spacing">22R</text>
<rect x="123.75" y="198.3" width="20.5" height="8.4" fill="none" stroke="#1414ff" stroke-width="1.2"/>
<text x="125.7" y="205.1" fill="#000080" stroke="#000080" stroke-width="0.22" textLength="12.8" lengthAdjust="spacing">22R</text>
<rect x="123.75" y="208.3" width="20.5" height="8.4" fill="none" stroke="#1414ff" stroke-width="1.2"/>
<text x="125.7" y="215.1" fill="#000080" stroke="#000080" stroke-width="0.22" textLength="12.8" lengthAdjust="spacing">22R</text>
<rect x="123.75" y="237.5" width="20.5" height="8.4" fill="none" stroke="#1414ff" stroke-width="1.2"/>
<text x="125.7" y="244.3" fill="#000080" stroke="#000080" stroke-width="0.22" textLength="12.8" lengthAdjust="spacing">22R</text>
<rect x="123.75" y="247.5" width="20.5" height="8.4" fill="none" stroke="#1414ff" stroke-width="1.2"/>
<text x="125.7" y="254.3" fill="#000080" stroke="#000080" stroke-width="0.22" textLength="12.8" lengthAdjust="spacing">22R</text>
<text x="39.25" y="299.3" fill="#800000" stroke="#800000" stroke-width="0.22" textLength="70" lengthAdjust="spacing">GMAC1_TXD0_M1</text>
<polyline points="39.25,301.6 241,301.6" fill="none" stroke="#000080" stroke-width="1.12" stroke-linecap="butt" stroke-linejoin="miter"/>
<polyline points="241,301.6 271,301.6" fill="none" stroke="#101010" stroke-width="1.1" stroke-linecap="butt" stroke-linejoin="miter"/>
<text x="262.2" y="299.7" fill="#000000" stroke="#000000" stroke-width="0.22" text-anchor="end">18</text>
<text x="277.5" y="304.4" fill="#000000" stroke="#000000" stroke-width="0.22">TXD0</text>
<polygon points="264.3,299.5 271.3,301.6 264.3,303.7" fill="#fefbf6" stroke="#000000" stroke-width="1.05" stroke-linejoin="miter"/>
<text x="39.25" y="309.3" fill="#800000" stroke="#800000" stroke-width="0.22" textLength="70" lengthAdjust="spacing">GMAC1_TXD1_M1</text>
<polyline points="39.25,311.6 241,311.6" fill="none" stroke="#000080" stroke-width="1.12" stroke-linecap="butt" stroke-linejoin="miter"/>
<polyline points="241,311.6 271,311.6" fill="none" stroke="#101010" stroke-width="1.1" stroke-linecap="butt" stroke-linejoin="miter"/>
<text x="262.2" y="309.7" fill="#000000" stroke="#000000" stroke-width="0.22" text-anchor="end">17</text>
<text x="277.5" y="314.4" fill="#000000" stroke="#000000" stroke-width="0.22">TXD1</text>
<polygon points="264.3,309.5 271.3,311.6 264.3,313.7" fill="#fefbf6" stroke="#000000" stroke-width="1.05" stroke-linejoin="miter"/>
<text x="39.25" y="319.3" fill="#800000" stroke="#800000" stroke-width="0.22" textLength="70" lengthAdjust="spacing">GMAC1_TXD2_M1</text>
<polyline points="39.25,321.6 241,321.6" fill="none" stroke="#000080" stroke-width="1.12" stroke-linecap="butt" stroke-linejoin="miter"/>
<polyline points="241,321.6 271,321.6" fill="none" stroke="#101010" stroke-width="1.1" stroke-linecap="butt" stroke-linejoin="miter"/>
<text x="262.2" y="319.7" fill="#000000" stroke="#000000" stroke-width="0.22" text-anchor="end">16</text>
<text x="277.5" y="324.4" fill="#000000" stroke="#000000" stroke-width="0.22">TXD2</text>
<polygon points="264.3,319.5 271.3,321.6 264.3,323.7" fill="#fefbf6" stroke="#000000" stroke-width="1.05" stroke-linejoin="miter"/>
<text x="39.25" y="329.3" fill="#800000" stroke="#800000" stroke-width="0.22" textLength="70" lengthAdjust="spacing">GMAC1_TXD3_M1</text>
<polyline points="39.25,331.6 241,331.6" fill="none" stroke="#000080" stroke-width="1.12" stroke-linecap="butt" stroke-linejoin="miter"/>
<polyline points="241,331.6 271,331.6" fill="none" stroke="#101010" stroke-width="1.1" stroke-linecap="butt" stroke-linejoin="miter"/>
<text x="262.2" y="329.7" fill="#000000" stroke="#000000" stroke-width="0.22" text-anchor="end">15</text>
<text x="277.5" y="334.4" fill="#000000" stroke="#000000" stroke-width="0.22">TXD3</text>
<polygon points="264.3,329.5 271.3,331.6 264.3,333.7" fill="#fefbf6" stroke="#000000" stroke-width="1.05" stroke-linejoin="miter"/>
<text x="39.25" y="349.3" fill="#800000" stroke="#800000" stroke-width="0.22" textLength="71.2" lengthAdjust="spacing">GMAC1_TXEN_M1</text>
<polyline points="39.25,351.6 241,351.6" fill="none" stroke="#000080" stroke-width="1.12" stroke-linecap="butt" stroke-linejoin="miter"/>
<polyline points="241,351.6 271,351.6" fill="none" stroke="#101010" stroke-width="1.1" stroke-linecap="butt" stroke-linejoin="miter"/>
<text x="262.2" y="349.7" fill="#000000" stroke="#000000" stroke-width="0.22" text-anchor="end">19</text>
<text x="277.5" y="354.4" fill="#000000" stroke="#000000" stroke-width="0.22">TXCTL</text>
<polygon points="264.3,349.5 271.3,351.6 264.3,353.7" fill="#fefbf6" stroke="#000000" stroke-width="1.05" stroke-linejoin="miter"/>
<text x="39.25" y="369.2" fill="#800000" stroke="#800000" stroke-width="0.22" textLength="76.2" lengthAdjust="spacing">GMAC1_TXCLK_M1</text>
<polyline points="39.25,371.5 241,371.5" fill="none" stroke="#000080" stroke-width="1.12" stroke-linecap="butt" stroke-linejoin="miter"/>
<polyline points="241,371.5 271,371.5" fill="none" stroke="#101010" stroke-width="1.1" stroke-linecap="butt" stroke-linejoin="miter"/>
<text x="262.2" y="369.6" fill="#000000" stroke="#000000" stroke-width="0.22" text-anchor="end">20</text>
<text x="277.5" y="374.3" fill="#000000" stroke="#000000" stroke-width="0.22">TXCLK</text>
<polygon points="264.3,369.4 271.3,371.5 264.3,373.6" fill="#fefbf6" stroke="#000000" stroke-width="1.05" stroke-linejoin="miter"/>
<text x="68" y="389" fill="#800000" stroke="#800000" stroke-width="0.22" textLength="49.5" lengthAdjust="spacing">VCCIO_PHY1</text>
<polyline points="124.25,381.15 124.25,391.35" fill="none" stroke="#800000" stroke-width="1.2" stroke-linecap="butt" stroke-linejoin="miter"/>
<polyline points="124.25,386.25 133.75,386.25" fill="none" stroke="#800000" stroke-width="1.2" stroke-linecap="butt" stroke-linejoin="miter"/>
<polyline points="149,386.25 158.25,386.25" fill="none" stroke="#101010" stroke-width="1.1" stroke-linecap="butt" stroke-linejoin="miter"/>
<polyline points="178.75,386.25 188,386.25" fill="none" stroke="#101010" stroke-width="1.1" stroke-linecap="butt" stroke-linejoin="miter"/>
<text x="144.5" y="383.75" fill="#000080" stroke="#000080" stroke-width="0.22" textLength="12" lengthAdjust="spacing">R94</text>
<polyline points="149,396.25 158.25,396.25" fill="none" stroke="#101010" stroke-width="1.1" stroke-linecap="butt" stroke-linejoin="miter"/>
<polyline points="178.75,396.25 188,396.25" fill="none" stroke="#101010" stroke-width="1.1" stroke-linecap="butt" stroke-linejoin="miter"/>
<text x="144.5" y="393.75" fill="#000080" stroke="#000080" stroke-width="0.22" textLength="12" lengthAdjust="spacing">R95</text>
<polyline points="149,411.1 158.25,411.1" fill="none" stroke="#101010" stroke-width="1.1" stroke-linecap="butt" stroke-linejoin="miter"/>
<polyline points="178.75,411.1 188,411.1" fill="none" stroke="#101010" stroke-width="1.1" stroke-linecap="butt" stroke-linejoin="miter"/>
<text x="144.5" y="409.3" fill="#000080" stroke="#000080" stroke-width="0.22" textLength="12" lengthAdjust="spacing">R96</text>
<polyline points="149,421.1 158.25,421.1" fill="none" stroke="#101010" stroke-width="1.1" stroke-linecap="butt" stroke-linejoin="miter"/>
<polyline points="178.75,421.1 188,421.1" fill="none" stroke="#101010" stroke-width="1.1" stroke-linecap="butt" stroke-linejoin="miter"/>
<text x="144.5" y="419.3" fill="#000080" stroke="#000080" stroke-width="0.22" textLength="12" lengthAdjust="spacing">R97</text>
<polyline points="133.75,386.25 149,386.25" fill="none" stroke="#000080" stroke-width="1.12" stroke-linecap="butt" stroke-linejoin="miter"/>
<polyline points="133.75,386.25 133.75,396.25 149,396.25" fill="none" stroke="#000080" stroke-width="1.12" stroke-linecap="butt" stroke-linejoin="miter"/>
<polyline points="188,386.25 203.75,386.25 203.75,421.1" fill="none" stroke="#000080" stroke-width="1.12" stroke-linecap="butt" stroke-linejoin="miter"/>
<polyline points="188,396.25 193.75,396.25 193.75,411.1" fill="none" stroke="#000080" stroke-width="1.12" stroke-linecap="butt" stroke-linejoin="miter"/>
<text x="39.25" y="408.8" fill="#800000" stroke="#800000" stroke-width="0.22" textLength="71.2" lengthAdjust="spacing">GMAC1_MDIO_M1</text>
<polyline points="39.25,411.1 149,411.1" fill="none" stroke="#000080" stroke-width="1.12" stroke-linecap="butt" stroke-linejoin="miter"/>
<polyline points="188,411.1 241,411.1" fill="none" stroke="#000080" stroke-width="1.12" stroke-linecap="butt" stroke-linejoin="miter"/>
<polyline points="241,411.1 271,411.1" fill="none" stroke="#101010" stroke-width="1.1" stroke-linecap="butt" stroke-linejoin="miter"/>
<text x="262.2" y="409.2" fill="#000000" stroke="#000000" stroke-width="0.22" text-anchor="end">14</text>
<text x="277.5" y="413.9" fill="#000000" stroke="#000000" stroke-width="0.22">MDIO</text>
<polygon points="264.4,409 257.4,411.1 264.4,413.2" fill="#fefbf6" stroke="#000000" stroke-width="1.05" stroke-linejoin="miter"/>
<polygon points="264.4,409 271.3,411.1 264.4,413.2" fill="#fefbf6" stroke="#000000" stroke-width="1.05" stroke-linejoin="miter"/>
<text x="39.25" y="418.8" fill="#800000" stroke="#800000" stroke-width="0.22" textLength="68.8" lengthAdjust="spacing">GMAC1_MDC_M1</text>
<polyline points="39.25,421.1 149,421.1" fill="none" stroke="#000080" stroke-width="1.12" stroke-linecap="butt" stroke-linejoin="miter"/>
<polyline points="188,421.1 241,421.1" fill="none" stroke="#000080" stroke-width="1.12" stroke-linecap="butt" stroke-linejoin="miter"/>
<polyline points="241,421.1 271,421.1" fill="none" stroke="#101010" stroke-width="1.1" stroke-linecap="butt" stroke-linejoin="miter"/>
<text x="262.2" y="419.2" fill="#000000" stroke="#000000" stroke-width="0.22" text-anchor="end">13</text>
<text x="277.5" y="423.9" fill="#000000" stroke="#000000" stroke-width="0.22">MDC</text>
<polygon points="264.3,419 271.3,421.1 264.3,423.2" fill="#fefbf6" stroke="#000000" stroke-width="1.05" stroke-linejoin="miter"/>
<rect x="158.25" y="382.25" width="20.5" height="8" fill="none" stroke="#1414ff" stroke-width="1.2"/>
<text x="158.75" y="389.45" fill="#000080" stroke="#000080" stroke-width="0.22" textLength="14.6" lengthAdjust="spacing">1.5K</text>
<rect x="158.25" y="392.25" width="20.5" height="8" fill="none" stroke="#1414ff" stroke-width="1.2"/>
<text x="158.75" y="399.45" fill="#000080" stroke="#000080" stroke-width="0.22" textLength="14.6" lengthAdjust="spacing">1.5K</text>
<rect x="158.25" y="407.1" width="20.5" height="8" fill="none" stroke="#1414ff" stroke-width="1.2"/>
<text x="158.75" y="414.3" fill="#000080" stroke="#000080" stroke-width="0.22" textLength="12.4" lengthAdjust="spacing">22R</text>
<rect x="158.25" y="417.1" width="20.5" height="8" fill="none" stroke="#1414ff" stroke-width="1.2"/>
<text x="158.75" y="424.3" fill="#000080" stroke="#000080" stroke-width="0.22" textLength="12.4" lengthAdjust="spacing">22R</text>
<text x="39.25" y="428.8" fill="#800000" stroke="#800000" stroke-width="0.22" textLength="72" lengthAdjust="spacing">GMAC1_INT/PMEB</text>
<polyline points="39.25,431 241,431" fill="none" stroke="#000080" stroke-width="1.12" stroke-linecap="butt" stroke-linejoin="miter"/>
<polyline points="241,431 271,431" fill="none" stroke="#101010" stroke-width="1.1" stroke-linecap="butt" stroke-linejoin="miter"/>
<text x="262.2" y="429.1" fill="#000000" stroke="#000000" stroke-width="0.22" text-anchor="end">31</text>
<text x="277.5" y="433.8" fill="#000000" stroke="#000000" stroke-width="0.22">INT</text>
<text x="116.25" y="443.9" fill="#800000" stroke="#800000" stroke-width="0.22" textLength="56.2" lengthAdjust="spacing">VCC3V3_PHY1</text>
<polyline points="178.75,436.15 178.75,446.35" fill="none" stroke="#800000" stroke-width="1.2" stroke-linecap="butt" stroke-linejoin="miter"/>
<polyline points="178.75,441.25 188.75,441.25" fill="none" stroke="#800000" stroke-width="1.2" stroke-linecap="butt" stroke-linejoin="miter"/>
<polyline points="188.75,441.25 198.25,441.25" fill="none" stroke="#101010" stroke-width="1.1" stroke-linecap="butt" stroke-linejoin="miter"/>
<rect x="198.25" y="437.25" width="20.5" height="8" fill="none" stroke="#1414ff" stroke-width="1.2"/>
<text x="198.75" y="444.45" fill="#000080" stroke="#000080" stroke-width="0.22" textLength="15.6" lengthAdjust="spacing">4.7K</text>
<polyline points="218.75,441.25 228,441.25" fill="none" stroke="#101010" stroke-width="1.1" stroke-linecap="butt" stroke-linejoin="miter"/>
<polyline points="228,441.25 238.25,441.25 238.25,431" fill="none" stroke="#000080" stroke-width="1.12" stroke-linecap="butt" stroke-linejoin="miter"/>
<text x="183.25" y="438.8" fill="#000080" stroke="#000080" stroke-width="0.22" textLength="12" lengthAdjust="spacing">R98</text>
<text x="39.25" y="468.7" fill="#800000" stroke="#800000" stroke-width="0.22" textLength="72" lengthAdjust="spacing">PHY1_CLKOUT125</text>
<polyline points="39.25,471.1 241,471.1" fill="none" stroke="#000080" stroke-width="1.12" stroke-linecap="butt" stroke-linejoin="miter"/>
<polyline points="241,471.1 271,471.1" fill="none" stroke="#101010" stroke-width="1.1" stroke-linecap="butt" stroke-linejoin="miter"/>
<text x="262.2" y="469.2" fill="#000000" stroke="#000000" stroke-width="0.22" text-anchor="end">35</text>
<text x="279" y="473.9" fill="#000000" stroke="#000000" stroke-width="0.22">CLKOUT</text>
<polygon points="270.7,469 265.2,471.1 270.7,473.2" fill="#fefbf6" stroke="#000000" stroke-width="1.05" stroke-linejoin="miter"/>
<polygon points="270.7,469 275.3,471.1 270.7,473.2" fill="#fffcd2" stroke="#000000" stroke-width="1.05" stroke-linejoin="miter"/>
<text x="134" y="468.7" fill="#f5101c" stroke="#f5101c" stroke-width="0.22" textLength="18.4" lengthAdjust="spacing">MAC</text>
<text x="184" y="468.7" fill="#f5101c" stroke="#f5101c" stroke-width="0.22" textLength="16.6" lengthAdjust="spacing">PHY</text>
<polyline points="158.5,466.8 181.4,466.8" fill="none" stroke="#f5101c" stroke-width="1.5" stroke-linecap="butt" stroke-linejoin="miter" stroke-dasharray="2.2 0.9"/>
<polygon points="155.2,466.8 159,464.9 159,468.7" fill="#f5101c"/>
<text x="168.2" y="488.7" fill="#800000" stroke="#800000" stroke-width="0.22" textLength="55.6" lengthAdjust="spacing">PHY1_XTALIN</text>
<polyline points="168.2,490.9 241,490.9" fill="none" stroke="#000080" stroke-width="1.12" stroke-linecap="butt" stroke-linejoin="miter"/>
<polyline points="241,490.9 271,490.9" fill="none" stroke="#101010" stroke-width="1.1" stroke-linecap="butt" stroke-linejoin="miter"/>
<text x="262.2" y="489" fill="#000000" stroke="#000000" stroke-width="0.22" text-anchor="end">36</text>
<text x="277.5" y="493.7" fill="#000000" stroke="#000000" stroke-width="0.22">XTAL_IN</text>
<polygon points="264.3,488.8 271.3,490.9 264.3,493" fill="#fefbf6" stroke="#000000" stroke-width="1.05" stroke-linejoin="miter"/>
<text x="168.2" y="498.7" fill="#800000" stroke="#800000" stroke-width="0.22" textLength="63.5" lengthAdjust="spacing">PHY1_XTALOUT</text>
<polyline points="168.2,500.9 241,500.9" fill="none" stroke="#000080" stroke-width="1.12" stroke-linecap="butt" stroke-linejoin="miter"/>
<polyline points="241,500.9 271,500.9" fill="none" stroke="#101010" stroke-width="1.1" stroke-linecap="butt" stroke-linejoin="miter"/>
<text x="262.2" y="499" fill="#000000" stroke="#000000" stroke-width="0.22" text-anchor="end">37</text>
<text x="277.5" y="503.7" fill="#000000" stroke="#000000" stroke-width="0.22">XTAL_OUT_EXT_CLK</text>
<polygon points="271,498.8 265.6,500.9 271,503" fill="#fefbf6" stroke="#000000" stroke-width="1.05" stroke-linejoin="miter"/>
<text x="39.25" y="548.6" fill="#800000" stroke="#800000" stroke-width="0.22" textLength="52.8" lengthAdjust="spacing">GMAC1_RSTn</text>
<polyline points="39.25,550.5 139,550.5" fill="none" stroke="#000080" stroke-width="1.12" stroke-linecap="butt" stroke-linejoin="miter"/>
<polyline points="139,550.5 148.25,550.5" fill="none" stroke="#101010" stroke-width="1.1" stroke-linecap="butt" stroke-linejoin="miter"/>
<rect x="148.25" y="546.5" width="20.5" height="8" fill="none" stroke="#1414ff" stroke-width="1.2"/>
<polyline points="168.75,550.5 178,550.5" fill="none" stroke="#101010" stroke-width="1.1" stroke-linecap="butt" stroke-linejoin="miter"/>
<polyline points="178,550.5 241,550.5" fill="none" stroke="#000080" stroke-width="1.12" stroke-linecap="butt" stroke-linejoin="miter"/>
<polyline points="241,550.5 271,550.5" fill="none" stroke="#101010" stroke-width="1.1" stroke-linecap="butt" stroke-linejoin="miter"/>
<text x="262.2" y="548.6" fill="#000000" stroke="#000000" stroke-width="0.22" text-anchor="end">12</text>
<text x="277.5" y="553.3" fill="#000000" stroke="#000000" stroke-width="0.22">PHYRSTB</text>
<polygon points="264.3,548.4 271.3,550.5 264.3,552.6" fill="#fefbf6" stroke="#000000" stroke-width="1.05" stroke-linejoin="miter"/>
<text x="148.25" y="543.8" fill="#000080" stroke="#000080" stroke-width="0.22" textLength="12" lengthAdjust="spacing">R99</text>
<text x="168" y="543.8" fill="#000080" stroke="#000080" stroke-width="0.22" textLength="9" lengthAdjust="spacing">0R</text>
<polyline points="188.75,550.5 188.75,560.5" fill="none" stroke="#101010" stroke-width="1.1" stroke-linecap="butt" stroke-linejoin="miter"/>
<rect x="184.6" y="560.5" width="8" height="20" fill="none" stroke="#1414ff" stroke-width="1.35"/>
<polyline points="188.75,580.5 188.75,590" fill="none" stroke="#101010" stroke-width="1.1" stroke-linecap="butt" stroke-linejoin="miter"/>
<polyline points="188.75,590 188.75,600" fill="none" stroke="#800000" stroke-width="1.2" stroke-linecap="butt" stroke-linejoin="miter"/>
<polyline points="183.75,600 193.75,600" fill="none" stroke="#800000" stroke-width="1.2" stroke-linecap="butt" stroke-linejoin="miter"/>
<text x="158.75" y="607.5" fill="#800000" stroke="#800000" stroke-width="0.22" textLength="55.5" lengthAdjust="spacing">VCC3V3_PHY1</text>
<text x="193.4" y="567.6" fill="#000080" stroke="#000080" stroke-width="0.22" textLength="17" lengthAdjust="spacing">R101</text>
<text x="193.4" y="577.6" fill="#f5101c" stroke="#f5101c" stroke-width="0.22" textLength="15.8" lengthAdjust="spacing">DNP</text>
<text x="193.4" y="588.8" fill="#000080" stroke="#000080" stroke-width="0.22" textLength="27.5" lengthAdjust="spacing">4.7K/NC</text>
<polyline points="238.35,550.5 238.35,565.5" fill="none" stroke="#101010" stroke-width="1.1" stroke-linecap="butt" stroke-linejoin="miter"/>
<polyline points="238.35,570 238.35,580" fill="none" stroke="#101010" stroke-width="1.1" stroke-linecap="butt" stroke-linejoin="miter"/>
<polyline points="233.05,565.5 243.65,565.5" fill="none" stroke="#1414ff" stroke-width="1.35" stroke-linecap="butt" stroke-linejoin="miter"/>
<polyline points="233.05,570 243.65,570" fill="none" stroke="#1414ff" stroke-width="1.35" stroke-linecap="butt" stroke-linejoin="miter"/>
<polyline points="238.35,580 238.35,590" fill="none" stroke="#800000" stroke-width="1.2" stroke-linecap="butt" stroke-linejoin="miter"/>
<polyline points="228.2,590 248.6,590" fill="none" stroke="#800000" stroke-width="1.2" stroke-linecap="butt" stroke-linejoin="miter"/>
<polyline points="231.3,593.05 245.5,593.05" fill="none" stroke="#800000" stroke-width="1.2" stroke-linecap="butt" stroke-linejoin="miter"/>
<polyline points="234,596.1 242.8,596.1" fill="none" stroke="#800000" stroke-width="1.2" stroke-linecap="butt" stroke-linejoin="miter"/>
<polyline points="237.15,599.1 239.65,599.1" fill="none" stroke="#800000" stroke-width="1.2" stroke-linecap="butt" stroke-linejoin="miter"/>
<text x="229.1" y="607.4" fill="#800000" stroke="#800000" stroke-width="0.22" textLength="17.8" lengthAdjust="spacing">GND</text>
<text x="238.8" y="562.6" fill="#000080" stroke="#000080" stroke-width="0.22" textLength="12.3" lengthAdjust="spacing">C62</text>
<text x="238.8" y="579" fill="#000080" stroke="#000080" stroke-width="0.22" textLength="10" lengthAdjust="spacing">104</text>
<polyline points="450.2,147.5 479.6,147.5" fill="none" stroke="#101010" stroke-width="1.1" stroke-linecap="butt" stroke-linejoin="miter"/>
<text x="458" y="145.2" fill="#000000" stroke="#000000" stroke-width="0.22">28</text>
<text x="440.8" y="150.4" fill="#000000" stroke="#000000" stroke-width="0.22" text-anchor="end">DVDD_RG</text>
<polyline points="479.6,147.5 502.5,147.5" fill="none" stroke="#000080" stroke-width="1.12" stroke-linecap="butt" stroke-linejoin="miter"/>
<polyline points="502.5,147.5 512,147.5" fill="none" stroke="#800000" stroke-width="1.2" stroke-linecap="butt" stroke-linejoin="miter"/>
<polyline points="512,142.4 512,152.6" fill="none" stroke="#800000" stroke-width="1.2" stroke-linecap="butt" stroke-linejoin="miter"/>
<text x="514.5" y="150.1" fill="#800000" stroke="#800000" stroke-width="0.22" textLength="50" lengthAdjust="spacing">VCCIO_PHY1</text>
<polyline points="450.2,182.5 489.5,182.5" fill="none" stroke="#101010" stroke-width="1.1" stroke-linecap="butt" stroke-linejoin="miter"/>
<text x="458" y="180.2" fill="#000000" stroke="#000000" stroke-width="0.22">39</text>
<text x="440.8" y="185.4" fill="#000000" stroke="#000000" stroke-width="0.22" text-anchor="end">RSET</text>
<polygon points="450.4,180.4 456.6,182.5 450.4,184.6" fill="#fefbf6" stroke="#000000" stroke-width="1.05" stroke-linejoin="miter"/>
<rect x="489.5" y="178.5" width="20" height="8" fill="none" stroke="#1414ff" stroke-width="1.2"/>
<polyline points="509.5,182.5 519,182.5" fill="none" stroke="#101010" stroke-width="1.1" stroke-linecap="butt" stroke-linejoin="miter"/>
<polyline points="519,182.5 540,182.5" fill="none" stroke="#000080" stroke-width="1.12" stroke-linecap="butt" stroke-linejoin="miter"/>
<polyline points="540,182.5 550,182.5" fill="none" stroke="#800000" stroke-width="1.2" stroke-linecap="butt" stroke-linejoin="miter"/>
<polyline points="550,172.4 550,192.6" fill="none" stroke="#800000" stroke-width="1.2" stroke-linecap="butt" stroke-linejoin="miter"/>
<polyline points="553,175.4 553,189.6" fill="none" stroke="#800000" stroke-width="1.2" stroke-linecap="butt" stroke-linejoin="miter"/>
<polyline points="556,178.1 556,186.9" fill="none" stroke="#800000" stroke-width="1.2" stroke-linecap="butt" stroke-linejoin="miter"/>
<polyline points="558.8,181.3 558.8,183.7" fill="none" stroke="#800000" stroke-width="1.2" stroke-linecap="butt" stroke-linejoin="miter"/>
<text x="561.4" y="185.3" fill="#800000" stroke="#800000" stroke-width="0.22" textLength="17.8" lengthAdjust="spacing">GND</text>
<text x="489.5" y="175.6" fill="#000080" stroke="#000080" stroke-width="0.22" textLength="12" lengthAdjust="spacing">R76</text>
<text x="512" y="180.6" fill="#000080" stroke="#000080" stroke-width="0.22" textLength="18.2" lengthAdjust="spacing">2.49K</text>
<polyline points="450.2,202.4 479.6,202.4" fill="none" stroke="#101010" stroke-width="1.1" stroke-linecap="butt" stroke-linejoin="miter"/>
<text x="458" y="200.1" fill="#000000" stroke="#000000" stroke-width="0.22">11</text>
<text x="440.8" y="205.3" fill="#000000" stroke="#000000" stroke-width="0.22" text-anchor="end">AVDD33</text>
<polyline points="479.6,202.4 479.6,212.5" fill="none" stroke="#000080" stroke-width="1.12" stroke-linecap="butt" stroke-linejoin="miter"/>
<polyline points="450.2,212.5 479.6,212.5" fill="none" stroke="#101010" stroke-width="1.1" stroke-linecap="butt" stroke-linejoin="miter"/>
<text x="458" y="210.2" fill="#000000" stroke="#000000" stroke-width="0.22">40</text>
<text x="440.8" y="215.4" fill="#000000" stroke="#000000" stroke-width="0.22" text-anchor="end">AVDD33</text>
<polyline points="479.6,212.5 502.5,212.5" fill="none" stroke="#000080" stroke-width="1.12" stroke-linecap="butt" stroke-linejoin="miter"/>
<polyline points="502.5,212.5 512,212.5" fill="none" stroke="#800000" stroke-width="1.2" stroke-linecap="butt" stroke-linejoin="miter"/>
<polyline points="512,207.4 512,217.6" fill="none" stroke="#800000" stroke-width="1.2" stroke-linecap="butt" stroke-linejoin="miter"/>
<text x="514.5" y="215.1" fill="#800000" stroke="#800000" stroke-width="0.22" textLength="56" lengthAdjust="spacing">VCC3V3_PHY1</text>
<polyline points="450.2,241.7 479.6,241.7" fill="none" stroke="#101010" stroke-width="1.1" stroke-linecap="butt" stroke-linejoin="miter"/>
<text x="458" y="239.4" fill="#000000" stroke="#000000" stroke-width="0.22">29</text>
<text x="440.8" y="244.6" fill="#000000" stroke="#000000" stroke-width="0.22" text-anchor="end">DVDD33</text>
<polyline points="479.6,241.7 502.5,241.7" fill="none" stroke="#000080" stroke-width="1.12" stroke-linecap="butt" stroke-linejoin="miter"/>
<polyline points="502.5,241.7 512,241.7" fill="none" stroke="#800000" stroke-width="1.2" stroke-linecap="butt" stroke-linejoin="miter"/>
<polyline points="512,236.6 512,246.8" fill="none" stroke="#800000" stroke-width="1.2" stroke-linecap="butt" stroke-linejoin="miter"/>
<text x="514.5" y="244.3" fill="#800000" stroke="#800000" stroke-width="0.22" textLength="56" lengthAdjust="spacing">VCC3V3_PHY1</text>
<polyline points="450.2,281.6 479.6,281.6" fill="none" stroke="#101010" stroke-width="1.1" stroke-linecap="butt" stroke-linejoin="miter"/>
<text x="458" y="279.3" fill="#000000" stroke="#000000" stroke-width="0.22">21</text>
<text x="440.8" y="284.5" fill="#000000" stroke="#000000" stroke-width="0.22" text-anchor="end">DVDD10</text>
<polyline points="479.6,281.6 607,281.6" fill="none" stroke="#000080" stroke-width="1.12" stroke-linecap="butt" stroke-linejoin="miter"/>
<polyline points="450.2,301.6 479.6,301.6" fill="none" stroke="#101010" stroke-width="1.1" stroke-linecap="butt" stroke-linejoin="miter"/>
<text x="458.6" y="299.3" fill="#000000" stroke="#000000" stroke-width="0.22">3</text>
<text x="440.8" y="304.5" fill="#000000" stroke="#000000" stroke-width="0.22" text-anchor="end">AVDD10</text>
<polyline points="450.2,311.6 479.6,311.6" fill="none" stroke="#101010" stroke-width="1.1" stroke-linecap="butt" stroke-linejoin="miter"/>
<text x="458.6" y="309.3" fill="#000000" stroke="#000000" stroke-width="0.22">8</text>
<text x="440.8" y="314.5" fill="#000000" stroke="#000000" stroke-width="0.22" text-anchor="end">AVDD10</text>
<polyline points="450.2,321.3 479.6,321.3" fill="none" stroke="#101010" stroke-width="1.1" stroke-linecap="butt" stroke-linejoin="miter"/>
<text x="458" y="319" fill="#000000" stroke="#000000" stroke-width="0.22">38</text>
<text x="440.8" y="324.2" fill="#000000" stroke="#000000" stroke-width="0.22" text-anchor="end">AVDD10</text>
<polyline points="479.6,301.6 479.6,321.3" fill="none" stroke="#000080" stroke-width="1.12" stroke-linecap="butt" stroke-linejoin="miter"/>
<polyline points="479.6,301.6 559.2,301.6" fill="none" stroke="#000080" stroke-width="1.12" stroke-linecap="butt" stroke-linejoin="miter"/>
<polyline points="559.2,301.6 563.8,301.6" fill="none" stroke="#101010" stroke-width="1.1" stroke-linecap="butt" stroke-linejoin="miter"/>
<path d="M563.8,301.6 a2.96,3.6 0 0 1 5.93,0 a2.96,3.6 0 0 1 5.93,0 a2.96,3.6 0 0 1 5.93,0 a2.96,3.6 0 0 1 5.93,0" fill="none" stroke="#1414ff" stroke-width="1.25"/>
<polyline points="587.5,301.6 592,301.6" fill="none" stroke="#101010" stroke-width="1.1" stroke-linecap="butt" stroke-linejoin="miter"/>
<polyline points="592,301.6 607,301.6" fill="none" stroke="#000080" stroke-width="1.12" stroke-linecap="butt" stroke-linejoin="miter"/>
<polyline points="492.5,301.6 492.5,312" fill="none" stroke="#101010" stroke-width="1.1" stroke-linecap="butt" stroke-linejoin="miter"/>
<polyline points="492.5,316.6 492.5,327" fill="none" stroke="#101010" stroke-width="1.1" stroke-linecap="butt" stroke-linejoin="miter"/>
<polyline points="487.2,312 497.8,312" fill="none" stroke="#1414ff" stroke-width="1.35" stroke-linecap="butt" stroke-linejoin="miter"/>
<polyline points="487.2,316.6 497.8,316.6" fill="none" stroke="#1414ff" stroke-width="1.35" stroke-linecap="butt" stroke-linejoin="miter"/>
<polyline points="514.5,301.6 514.5,312" fill="none" stroke="#101010" stroke-width="1.1" stroke-linecap="butt" stroke-linejoin="miter"/>
<polyline points="514.5,316.6 514.5,327" fill="none" stroke="#101010" stroke-width="1.1" stroke-linecap="butt" stroke-linejoin="miter"/>
<polyline points="509.2,312 519.8,312" fill="none" stroke="#1414ff" stroke-width="1.35" stroke-linecap="butt" stroke-linejoin="miter"/>
<polyline points="509.2,316.6 519.8,316.6" fill="none" stroke="#1414ff" stroke-width="1.35" stroke-linecap="butt" stroke-linejoin="miter"/>
<polyline points="537,301.6 537,312" fill="none" stroke="#101010" stroke-width="1.1" stroke-linecap="butt" stroke-linejoin="miter"/>
<polyline points="537,316.6 537,327" fill="none" stroke="#101010" stroke-width="1.1" stroke-linecap="butt" stroke-linejoin="miter"/>
<polyline points="531.7,312 542.3,312" fill="none" stroke="#1414ff" stroke-width="1.35" stroke-linecap="butt" stroke-linejoin="miter"/>
<polyline points="531.7,316.6 542.3,316.6" fill="none" stroke="#1414ff" stroke-width="1.35" stroke-linecap="butt" stroke-linejoin="miter"/>
<polyline points="492.5,327 544.5,327" fill="none" stroke="#000080" stroke-width="1.12" stroke-linecap="butt" stroke-linejoin="miter"/>
<polyline points="544.5,327 554.5,327" fill="none" stroke="#800000" stroke-width="1.2" stroke-linecap="butt" stroke-linejoin="miter"/>
<polyline points="554.5,316.9 554.5,337.1" fill="none" stroke="#800000" stroke-width="1.2" stroke-linecap="butt" stroke-linejoin="miter"/>
<polyline points="557.5,319.9 557.5,334.1" fill="none" stroke="#800000" stroke-width="1.2" stroke-linecap="butt" stroke-linejoin="miter"/>
<polyline points="560.5,322.6 560.5,331.4" fill="none" stroke="#800000" stroke-width="1.2" stroke-linecap="butt" stroke-linejoin="miter"/>
<polyline points="563.3,325.8 563.3,328.2" fill="none" stroke="#800000" stroke-width="1.2" stroke-linecap="butt" stroke-linejoin="miter"/>
<text x="565.9" y="329.8" fill="#800000" stroke="#800000" stroke-width="0.22" textLength="17.8" lengthAdjust="spacing">GND</text>
<text x="492.7" y="310" fill="#000080" stroke="#000080" stroke-width="0.22" textLength="12.3" lengthAdjust="spacing">C55</text>
<text x="514.7" y="310" fill="#000080" stroke="#000080" stroke-width="0.22" textLength="12.3" lengthAdjust="spacing">C56</text>
<text x="537.2" y="310" fill="#000080" stroke="#000080" stroke-width="0.22" textLength="12.3" lengthAdjust="spacing">C57</text>
<text x="493.2" y="325" fill="#000080" stroke="#000080" stroke-width="0.22" textLength="14.2" lengthAdjust="spacing">10uF</text>
<text x="515.2" y="325" fill="#000080" stroke="#000080" stroke-width="0.22" textLength="10.1" lengthAdjust="spacing">104</text>
<text x="537.7" y="325" fill="#000080" stroke="#000080" stroke-width="0.22" textLength="10.1" lengthAdjust="spacing">104</text>
<text x="560" y="294.8" fill="#000080" stroke="#000080" stroke-width="0.22" textLength="27" lengthAdjust="spacing">120R,2A</text>
<text x="568" y="311.3" fill="#000080" stroke="#000080" stroke-width="0.22" textLength="11.8" lengthAdjust="spacing">L15</text>
<text x="579.5" y="270" fill="#800000" stroke="#800000" stroke-width="0.22" textLength="51.2" lengthAdjust="spacing">VDD10_PHY1</text>
<polyline points="602,272 611.3,272" fill="none" stroke="#800000" stroke-width="1.2" stroke-linecap="butt" stroke-linejoin="miter"/>
<polyline points="607,272 607,281.6" fill="none" stroke="#800000" stroke-width="1.2" stroke-linecap="butt" stroke-linejoin="miter"/>
<polyline points="607,281.6 607,351.6" fill="none" stroke="#000080" stroke-width="1.12" stroke-linecap="butt" stroke-linejoin="miter"/>
<polyline points="450.2,351.6 479.6,351.6" fill="none" stroke="#101010" stroke-width="1.1" stroke-linecap="butt" stroke-linejoin="miter"/>
<text x="458" y="349.3" fill="#000000" stroke="#000000" stroke-width="0.22">30</text>
<text x="440.8" y="354.5" fill="#000000" stroke="#000000" stroke-width="0.22" text-anchor="end">REG_OUT</text>
<polygon points="450.4,349.5 456.6,351.6 450.4,353.7" fill="#fefbf6" stroke="#000000" stroke-width="1.05" stroke-linejoin="miter"/>
<polyline points="479.6,351.6 488.5,351.6" fill="none" stroke="#000080" stroke-width="1.12" stroke-linecap="butt" stroke-linejoin="miter"/>
<polyline points="488.5,351.6 493,351.6" fill="none" stroke="#101010" stroke-width="1.1" stroke-linecap="butt" stroke-linejoin="miter"/>
<path d="M493,351.6 a3.06,3.6 0 0 1 6.12,0 a3.06,3.6 0 0 1 6.12,0 a3.06,3.6 0 0 1 6.12,0 a3.06,3.6 0 0 1 6.12,0" fill="none" stroke="#1414ff" stroke-width="1.25"/>
<polyline points="517.5,351.6 522,351.6" fill="none" stroke="#101010" stroke-width="1.1" stroke-linecap="butt" stroke-linejoin="miter"/>
<polyline points="522,351.6 607,351.6" fill="none" stroke="#000080" stroke-width="1.12" stroke-linecap="butt" stroke-linejoin="miter"/>
<polyline points="450.2,381.3 479.6,381.3" fill="none" stroke="#101010" stroke-width="1.1" stroke-linecap="butt" stroke-linejoin="miter"/>
<text x="458" y="379" fill="#000000" stroke="#000000" stroke-width="0.22">41</text>
<text x="440.8" y="384.2" fill="#000000" stroke="#000000" stroke-width="0.22" text-anchor="end">E-PAD</text>
<polyline points="479.6,381.3 607,381.3" fill="none" stroke="#000080" stroke-width="1.12" stroke-linecap="butt" stroke-linejoin="miter"/>
<polyline points="552,351.6 552,366.8" fill="none" stroke="#101010" stroke-width="1.1" stroke-linecap="butt" stroke-linejoin="miter"/>
<polyline points="552,371.4 552,381.3" fill="none" stroke="#101010" stroke-width="1.1" stroke-linecap="butt" stroke-linejoin="miter"/>
<polyline points="546.7,366.8 557.3,366.8" fill="none" stroke="#1414ff" stroke-width="1.35" stroke-linecap="butt" stroke-linejoin="miter"/>
<polyline points="546.7,371.4 557.3,371.4" fill="none" stroke="#1414ff" stroke-width="1.35" stroke-linecap="butt" stroke-linejoin="miter"/>
<polyline points="581.9,351.6 581.9,366.8" fill="none" stroke="#101010" stroke-width="1.1" stroke-linecap="butt" stroke-linejoin="miter"/>
<polyline points="581.9,371.4 581.9,381.3" fill="none" stroke="#101010" stroke-width="1.1" stroke-linecap="butt" stroke-linejoin="miter"/>
<polyline points="576.6,366.8 587.2,366.8" fill="none" stroke="#1414ff" stroke-width="1.35" stroke-linecap="butt" stroke-linejoin="miter"/>
<polyline points="576.6,371.4 587.2,371.4" fill="none" stroke="#1414ff" stroke-width="1.35" stroke-linecap="butt" stroke-linejoin="miter"/>
<polyline points="606.9,351.6 606.9,366.8" fill="none" stroke="#101010" stroke-width="1.1" stroke-linecap="butt" stroke-linejoin="miter"/>
<polyline points="606.9,371.4 606.9,381.3" fill="none" stroke="#101010" stroke-width="1.1" stroke-linecap="butt" stroke-linejoin="miter"/>
<polyline points="601.6,366.8 612.2,366.8" fill="none" stroke="#1414ff" stroke-width="1.35" stroke-linecap="butt" stroke-linejoin="miter"/>
<polyline points="601.6,371.4 612.2,371.4" fill="none" stroke="#1414ff" stroke-width="1.35" stroke-linecap="butt" stroke-linejoin="miter"/>
<polyline points="606.9,381.3 606.9,391.2" fill="none" stroke="#800000" stroke-width="1.2" stroke-linecap="butt" stroke-linejoin="miter"/>
<polyline points="596.7,391.2 617.1,391.2" fill="none" stroke="#800000" stroke-width="1.2" stroke-linecap="butt" stroke-linejoin="miter"/>
<polyline points="599.8,394.25 614,394.25" fill="none" stroke="#800000" stroke-width="1.2" stroke-linecap="butt" stroke-linejoin="miter"/>
<polyline points="602.5,397.3 611.3,397.3" fill="none" stroke="#800000" stroke-width="1.2" stroke-linecap="butt" stroke-linejoin="miter"/>
<polyline points="605.65,400.3 608.15,400.3" fill="none" stroke="#800000" stroke-width="1.2" stroke-linecap="butt" stroke-linejoin="miter"/>
<text x="597.6" y="408.6" fill="#800000" stroke="#800000" stroke-width="0.22" textLength="17.8" lengthAdjust="spacing">GND</text>
<text x="482.5" y="345" fill="#000080" stroke="#000080" stroke-width="0.22" textLength="11.8" lengthAdjust="spacing">L16</text>
<text x="499.5" y="345" fill="#000080" stroke="#000080" stroke-width="0.22" textLength="18" lengthAdjust="spacing">4.7uH</text>
<text x="484.3" y="361.3" fill="#f5101c" stroke="#f5101c" stroke-width="0.22" textLength="30.2" lengthAdjust="spacing">1A 180R</text>
<text x="469.3" y="368.8" fill="#f5101c" stroke="#f5101c" stroke-width="0.22" textLength="72.7" lengthAdjust="spacing">Trace length &lt; 0.5cm</text>
<text x="552.4" y="364.6" fill="#000080" stroke="#000080" stroke-width="0.22" textLength="12.3" lengthAdjust="spacing">C58</text>
<text x="552.8" y="378.8" fill="#000080" stroke="#000080" stroke-width="0.22" textLength="14.2" lengthAdjust="spacing">10uF</text>
<text x="582" y="365" fill="#000080" stroke="#000080" stroke-width="0.22" textLength="12.3" lengthAdjust="spacing">C59</text>
<text x="583" y="378.8" fill="#000080" stroke="#000080" stroke-width="0.22" textLength="10.1" lengthAdjust="spacing">104</text>
<text x="608" y="378.8" fill="#000080" stroke="#000080" stroke-width="0.22" textLength="10.1" lengthAdjust="spacing">104</text>
<text x="621.8" y="383.3" fill="#000080" stroke="#000080" stroke-width="0.22" textLength="12" lengthAdjust="spacing">C60</text>
<polyline points="450.2,411.2 479.6,411.2" fill="none" stroke="#101010" stroke-width="1.1" stroke-linecap="butt" stroke-linejoin="miter"/>
<text x="458.6" y="408.9" fill="#000000" stroke="#000000" stroke-width="0.22">1</text>
<text x="440.8" y="414.1" fill="#000000" stroke="#000000" stroke-width="0.22" text-anchor="end">MDIP0</text>
<polygon points="456.6,409 449.4,411.2 456.6,413.4" fill="#fefbf6" stroke="#000000" stroke-width="1.05" stroke-linejoin="miter"/>
<polygon points="456.6,409 463.6,411.2 456.6,413.4" fill="#fefbf6" stroke="#000000" stroke-width="1.05" stroke-linejoin="miter"/>
<polyline points="479.6,411.2 602,411.2" fill="none" stroke="#000080" stroke-width="1.12" stroke-linecap="butt" stroke-linejoin="miter"/>
<text x="482.2" y="409.3" fill="#800000" stroke="#800000" stroke-width="0.22" textLength="66.4" lengthAdjust="spacing">PHY1_RJ45_D1_P</text>
<path d="M566.6,403.9 L570.6,403.9 L572.7,401.8 L577,401.8 L579.1,403.9 L583.1,403.9" fill="none" stroke="#f5101c" stroke-width="1.25" stroke-linejoin="round"/>
<path d="M562.2,411 L566.6,406.1 L570.6,406.1 L572.7,408.3 L577,408.3 L579.1,406.1 L583.1,406.1" fill="none" stroke="#f5101c" stroke-width="1.25" stroke-linejoin="round"/>
<polyline points="450.2,421.2 479.6,421.2" fill="none" stroke="#101010" stroke-width="1.1" stroke-linecap="butt" stroke-linejoin="miter"/>
<text x="458.6" y="418.9" fill="#000000" stroke="#000000" stroke-width="0.22">2</text>
<text x="440.8" y="424.1" fill="#000000" stroke="#000000" stroke-width="0.22" text-anchor="end">MDIN0</text>
<polygon points="456.6,419 449.4,421.2 456.6,423.4" fill="#fefbf6" stroke="#000000" stroke-width="1.05" stroke-linejoin="miter"/>
<polygon points="456.6,419 463.6,421.2 456.6,423.4" fill="#fefbf6" stroke="#000000" stroke-width="1.05" stroke-linejoin="miter"/>
<polyline points="479.6,421.2 602,421.2" fill="none" stroke="#000080" stroke-width="1.12" stroke-linecap="butt" stroke-linejoin="miter"/>
<text x="482.2" y="419.3" fill="#800000" stroke="#800000" stroke-width="0.22" textLength="67.6" lengthAdjust="spacing">PHY1_RJ45_D1_N</text>
<path d="M566.6,413.9 L570.6,413.9 L572.7,411.8 L577,411.8 L579.1,413.9 L583.1,413.9" fill="none" stroke="#f5101c" stroke-width="1.25" stroke-linejoin="round"/>
<path d="M562.2,421 L566.6,416.1 L570.6,416.1 L572.7,418.3 L577,418.3 L579.1,416.1 L583.1,416.1" fill="none" stroke="#f5101c" stroke-width="1.25" stroke-linejoin="round"/>
<polyline points="450.2,441.2 479.6,441.2" fill="none" stroke="#101010" stroke-width="1.1" stroke-linecap="butt" stroke-linejoin="miter"/>
<text x="458.6" y="438.9" fill="#000000" stroke="#000000" stroke-width="0.22">4</text>
<text x="440.8" y="444.1" fill="#000000" stroke="#000000" stroke-width="0.22" text-anchor="end">MDIP1</text>
<polygon points="456.6,439 449.4,441.2 456.6,443.4" fill="#fefbf6" stroke="#000000" stroke-width="1.05" stroke-linejoin="miter"/>
<polygon points="456.6,439 463.6,441.2 456.6,443.4" fill="#fefbf6" stroke="#000000" stroke-width="1.05" stroke-linejoin="miter"/>
<polyline points="479.6,441.2 602,441.2" fill="none" stroke="#000080" stroke-width="1.12" stroke-linecap="butt" stroke-linejoin="miter"/>
<text x="482.2" y="439.3" fill="#800000" stroke="#800000" stroke-width="0.22" textLength="66.4" lengthAdjust="spacing">PHY1_RJ45_D2_P</text>
<path d="M566.6,433.9 L570.6,433.9 L572.7,431.8 L577,431.8 L579.1,433.9 L583.1,433.9" fill="none" stroke="#f5101c" stroke-width="1.25" stroke-linejoin="round"/>
<path d="M562.2,441 L566.6,436.1 L570.6,436.1 L572.7,438.3 L577,438.3 L579.1,436.1 L583.1,436.1" fill="none" stroke="#f5101c" stroke-width="1.25" stroke-linejoin="round"/>
<polyline points="450.2,451 479.6,451" fill="none" stroke="#101010" stroke-width="1.1" stroke-linecap="butt" stroke-linejoin="miter"/>
<text x="458.6" y="448.7" fill="#000000" stroke="#000000" stroke-width="0.22">5</text>
<text x="440.8" y="453.9" fill="#000000" stroke="#000000" stroke-width="0.22" text-anchor="end">MDIN1</text>
<polygon points="456.6,448.8 449.4,451 456.6,453.2" fill="#fefbf6" stroke="#000000" stroke-width="1.05" stroke-linejoin="miter"/>
<polygon points="456.6,448.8 463.6,451 456.6,453.2" fill="#fefbf6" stroke="#000000" stroke-width="1.05" stroke-linejoin="miter"/>
<polyline points="479.6,451 602,451" fill="none" stroke="#000080" stroke-width="1.12" stroke-linecap="butt" stroke-linejoin="miter"/>
<text x="482.2" y="449.1" fill="#800000" stroke="#800000" stroke-width="0.22" textLength="67.6" lengthAdjust="spacing">PHY1_RJ45_D2_N</text>
<path d="M566.6,443.7 L570.6,443.7 L572.7,441.6 L577,441.6 L579.1,443.7 L583.1,443.7" fill="none" stroke="#f5101c" stroke-width="1.25" stroke-linejoin="round"/>
<path d="M562.2,450.8 L566.6,445.9 L570.6,445.9 L572.7,448.1 L577,448.1 L579.1,445.9 L583.1,445.9" fill="none" stroke="#f5101c" stroke-width="1.25" stroke-linejoin="round"/>
<polyline points="450.2,471.1 479.6,471.1" fill="none" stroke="#101010" stroke-width="1.1" stroke-linecap="butt" stroke-linejoin="miter"/>
<text x="458.6" y="468.8" fill="#000000" stroke="#000000" stroke-width="0.22">6</text>
<text x="440.8" y="474" fill="#000000" stroke="#000000" stroke-width="0.22" text-anchor="end">MDIP2</text>
<polygon points="456.6,468.9 449.4,471.1 456.6,473.3" fill="#fefbf6" stroke="#000000" stroke-width="1.05" stroke-linejoin="miter"/>
<polygon points="456.6,468.9 463.6,471.1 456.6,473.3" fill="#fefbf6" stroke="#000000" stroke-width="1.05" stroke-linejoin="miter"/>
<polyline points="479.6,471.1 602,471.1" fill="none" stroke="#000080" stroke-width="1.12" stroke-linecap="butt" stroke-linejoin="miter"/>
<text x="482.2" y="469.2" fill="#800000" stroke="#800000" stroke-width="0.22" textLength="66.4" lengthAdjust="spacing">PHY1_RJ45_D3_P</text>
<path d="M566.6,463.8 L570.6,463.8 L572.7,461.7 L577,461.7 L579.1,463.8 L583.1,463.8" fill="none" stroke="#f5101c" stroke-width="1.25" stroke-linejoin="round"/>
<path d="M562.2,470.9 L566.6,466 L570.6,466 L572.7,468.2 L577,468.2 L579.1,466 L583.1,466" fill="none" stroke="#f5101c" stroke-width="1.25" stroke-linejoin="round"/>
<polyline points="450.2,481 479.6,481" fill="none" stroke="#101010" stroke-width="1.1" stroke-linecap="butt" stroke-linejoin="miter"/>
<text x="458.6" y="478.7" fill="#000000" stroke="#000000" stroke-width="0.22">7</text>
<text x="440.8" y="483.9" fill="#000000" stroke="#000000" stroke-width="0.22" text-anchor="end">MDIN2</text>
<polygon points="456.6,478.8 449.4,481 456.6,483.2" fill="#fefbf6" stroke="#000000" stroke-width="1.05" stroke-linejoin="miter"/>
<polygon points="456.6,478.8 463.6,481 456.6,483.2" fill="#fefbf6" stroke="#000000" stroke-width="1.05" stroke-linejoin="miter"/>
<polyline points="479.6,481 602,481" fill="none" stroke="#000080" stroke-width="1.12" stroke-linecap="butt" stroke-linejoin="miter"/>
<text x="482.2" y="479.1" fill="#800000" stroke="#800000" stroke-width="0.22" textLength="67.6" lengthAdjust="spacing">PHY1_RJ45_D3_N</text>
<path d="M566.6,473.7 L570.6,473.7 L572.7,471.6 L577,471.6 L579.1,473.7 L583.1,473.7" fill="none" stroke="#f5101c" stroke-width="1.25" stroke-linejoin="round"/>
<path d="M562.2,480.8 L566.6,475.9 L570.6,475.9 L572.7,478.1 L577,478.1 L579.1,475.9 L583.1,475.9" fill="none" stroke="#f5101c" stroke-width="1.25" stroke-linejoin="round"/>
<polyline points="450.2,500.6 479.6,500.6" fill="none" stroke="#101010" stroke-width="1.1" stroke-linecap="butt" stroke-linejoin="miter"/>
<text x="458.6" y="498.3" fill="#000000" stroke="#000000" stroke-width="0.22">9</text>
<text x="440.8" y="503.5" fill="#000000" stroke="#000000" stroke-width="0.22" text-anchor="end">MDIP3</text>
<polygon points="456.6,498.4 449.4,500.6 456.6,502.8" fill="#fefbf6" stroke="#000000" stroke-width="1.05" stroke-linejoin="miter"/>
<polygon points="456.6,498.4 463.6,500.6 456.6,502.8" fill="#fefbf6" stroke="#000000" stroke-width="1.05" stroke-linejoin="miter"/>
<polyline points="479.6,500.6 602,500.6" fill="none" stroke="#000080" stroke-width="1.12" stroke-linecap="butt" stroke-linejoin="miter"/>
<text x="482.2" y="498.7" fill="#800000" stroke="#800000" stroke-width="0.22" textLength="66.4" lengthAdjust="spacing">PHY1_RJ45_D4_P</text>
<path d="M566.6,493.3 L570.6,493.3 L572.7,491.2 L577,491.2 L579.1,493.3 L583.1,493.3" fill="none" stroke="#f5101c" stroke-width="1.25" stroke-linejoin="round"/>
<path d="M562.2,500.4 L566.6,495.5 L570.6,495.5 L572.7,497.7 L577,497.7 L579.1,495.5 L583.1,495.5" fill="none" stroke="#f5101c" stroke-width="1.25" stroke-linejoin="round"/>
<polyline points="450.2,510.6 479.6,510.6" fill="none" stroke="#101010" stroke-width="1.1" stroke-linecap="butt" stroke-linejoin="miter"/>
<text x="458" y="508.3" fill="#000000" stroke="#000000" stroke-width="0.22">10</text>
<text x="440.8" y="513.5" fill="#000000" stroke="#000000" stroke-width="0.22" text-anchor="end">MDIN3</text>
<polygon points="456.6,508.4 449.4,510.6 456.6,512.8" fill="#fefbf6" stroke="#000000" stroke-width="1.05" stroke-linejoin="miter"/>
<polygon points="456.6,508.4 463.6,510.6 456.6,512.8" fill="#fefbf6" stroke="#000000" stroke-width="1.05" stroke-linejoin="miter"/>
<polyline points="479.6,510.6 602,510.6" fill="none" stroke="#000080" stroke-width="1.12" stroke-linecap="butt" stroke-linejoin="miter"/>
<text x="482.2" y="508.7" fill="#800000" stroke="#800000" stroke-width="0.22" textLength="67.6" lengthAdjust="spacing">PHY1_RJ45_D4_N</text>
<path d="M566.6,503.3 L570.6,503.3 L572.7,501.2 L577,501.2 L579.1,503.3 L583.1,503.3" fill="none" stroke="#f5101c" stroke-width="1.25" stroke-linejoin="round"/>
<path d="M562.2,510.4 L566.6,505.5 L570.6,505.5 L572.7,507.7 L577,507.7 L579.1,505.5 L583.1,505.5" fill="none" stroke="#f5101c" stroke-width="1.25" stroke-linejoin="round"/>
<polyline points="450.2,530.5 479.6,530.5" fill="none" stroke="#101010" stroke-width="1.1" stroke-linecap="butt" stroke-linejoin="miter"/>
<text x="458" y="528.2" fill="#000000" stroke="#000000" stroke-width="0.22">32</text>
<text x="438.9" y="534" fill="#000000" stroke="#000000" stroke-width="0.22" text-anchor="end">LED0_CFG_EXT</text>
<polygon points="456.6,528.3 449.4,530.5 456.6,532.7" fill="#fefbf6" stroke="#000000" stroke-width="1.05" stroke-linejoin="miter"/>
<polygon points="456.6,528.3 463.6,530.5 456.6,532.7" fill="#fefbf6" stroke="#000000" stroke-width="1.05" stroke-linejoin="miter"/>
<polyline points="479.6,530.5 602,530.5" fill="none" stroke="#000080" stroke-width="1.12" stroke-linecap="butt" stroke-linejoin="miter"/>
<text x="482.4" y="528.8" fill="#800000" stroke="#800000" stroke-width="0.22" textLength="85.2" lengthAdjust="spacing">PHY1_LED0/CFG_EXT</text>
<polyline points="450.2,540.5 479.6,540.5" fill="none" stroke="#101010" stroke-width="1.1" stroke-linecap="butt" stroke-linejoin="miter"/>
<text x="458" y="538.2" fill="#000000" stroke="#000000" stroke-width="0.22">33</text>
<text x="438.9" y="544" fill="#000000" stroke="#000000" stroke-width="0.22" text-anchor="end">LED1_CFG_LDO</text>
<polygon points="456.6,538.3 449.4,540.5 456.6,542.7" fill="#fefbf6" stroke="#000000" stroke-width="1.05" stroke-linejoin="miter"/>
<polygon points="456.6,538.3 463.6,540.5 456.6,542.7" fill="#fefbf6" stroke="#000000" stroke-width="1.05" stroke-linejoin="miter"/>
<polyline points="479.6,540.5 602,540.5" fill="none" stroke="#000080" stroke-width="1.12" stroke-linecap="butt" stroke-linejoin="miter"/>
<text x="482.4" y="538.8" fill="#800000" stroke="#800000" stroke-width="0.22" textLength="90" lengthAdjust="spacing">PHY1_LED1/CFG_LDO0</text>
<polyline points="450.2,565.5 479.6,565.5" fill="none" stroke="#101010" stroke-width="1.1" stroke-linecap="butt" stroke-linejoin="miter"/>
<text x="458" y="563.2" fill="#000000" stroke="#000000" stroke-width="0.22">34</text>
<text x="438.9" y="568.4" fill="#000000" stroke="#000000" stroke-width="0.22" text-anchor="end">LED2_CFG_LDO1</text>
<polygon points="450.4,563.4 456.6,565.5 450.4,567.6" fill="#fefbf6" stroke="#000000" stroke-width="1.05" stroke-linejoin="miter"/>
<polyline points="479.6,565.5 602,565.5" fill="none" stroke="#000080" stroke-width="1.12" stroke-linecap="butt" stroke-linejoin="miter"/>
<text x="482.4" y="563.8" fill="#800000" stroke="#800000" stroke-width="0.22" textLength="89.5" lengthAdjust="spacing">PHY1_LED2/CFG_LDO1</text>
<polyline points="746.5,231.9 746.5,252.1" fill="none" stroke="#800000" stroke-width="1.2" stroke-linecap="butt" stroke-linejoin="miter"/>
<polyline points="743.5,234.9 743.5,249.1" fill="none" stroke="#800000" stroke-width="1.2" stroke-linecap="butt" stroke-linejoin="miter"/>
<polyline points="740.5,237.6 740.5,246.4" fill="none" stroke="#800000" stroke-width="1.2" stroke-linecap="butt" stroke-linejoin="miter"/>
<polyline points="737.7,240.8 737.7,243.2" fill="none" stroke="#800000" stroke-width="1.2" stroke-linecap="butt" stroke-linejoin="miter"/>
<text x="715.1" y="244.8" fill="#800000" stroke="#800000" stroke-width="0.22" textLength="17.8" lengthAdjust="spacing">GND</text>
<polyline points="746.5,242 756.5,242" fill="none" stroke="#800000" stroke-width="1.2" stroke-linecap="butt" stroke-linejoin="miter"/>
<polyline points="756.5,242 767.5,242" fill="none" stroke="#000080" stroke-width="1.12" stroke-linecap="butt" stroke-linejoin="miter"/>
<polyline points="767.5,242 775.75,242" fill="none" stroke="#101010" stroke-width="1.1" stroke-linecap="butt" stroke-linejoin="miter"/>
<rect x="775.75" y="238" width="20.5" height="8" fill="none" stroke="#1414ff" stroke-width="1.2"/>
<text x="776.15" y="245.2" fill="#f5101c" stroke="#f5101c" stroke-width="0.22" textLength="16.2" lengthAdjust="spacing">DNP</text>
<polyline points="796.25,242 806,242" fill="none" stroke="#101010" stroke-width="1.1" stroke-linecap="butt" stroke-linejoin="miter"/>
<polyline points="806,242 925.5,242" fill="none" stroke="#000080" stroke-width="1.12" stroke-linecap="butt" stroke-linejoin="miter"/>
<text x="761.25" y="234.6" fill="#000080" stroke="#000080" stroke-width="0.22" textLength="11.6" lengthAdjust="spacing">R81</text>
<text x="781.25" y="234.6" fill="#000080" stroke="#000080" stroke-width="0.22" textLength="26.4" lengthAdjust="spacing">4.7K/NC</text>
<text x="825.75" y="239.5" fill="#800000" stroke="#800000" stroke-width="0.22" textLength="84.8" lengthAdjust="spacing">PHY1_LED0/CFG_EXT</text>
<polyline points="925.5,242 935,242" fill="none" stroke="#101010" stroke-width="1.1" stroke-linecap="butt" stroke-linejoin="miter"/>
<rect x="935" y="238" width="20.5" height="8" fill="none" stroke="#1414ff" stroke-width="1.2"/>
<polyline points="955.5,242 965,242" fill="none" stroke="#101010" stroke-width="1.1" stroke-linecap="butt" stroke-linejoin="miter"/>
<text x="925" y="234.6" fill="#000080" stroke="#000080" stroke-width="0.22" textLength="12" lengthAdjust="spacing">R82</text>
<text x="940" y="234.6" fill="#000080" stroke="#000080" stroke-width="0.22" textLength="13.8" lengthAdjust="spacing">4.7K</text>
<polyline points="746.5,251.9 746.5,272.1" fill="none" stroke="#800000" stroke-width="1.2" stroke-linecap="butt" stroke-linejoin="miter"/>
<polyline points="743.5,254.9 743.5,269.1" fill="none" stroke="#800000" stroke-width="1.2" stroke-linecap="butt" stroke-linejoin="miter"/>
<polyline points="740.5,257.6 740.5,266.4" fill="none" stroke="#800000" stroke-width="1.2" stroke-linecap="butt" stroke-linejoin="miter"/>
<polyline points="737.7,260.8 737.7,263.2" fill="none" stroke="#800000" stroke-width="1.2" stroke-linecap="butt" stroke-linejoin="miter"/>
<text x="715.1" y="264.8" fill="#800000" stroke="#800000" stroke-width="0.22" textLength="17.8" lengthAdjust="spacing">GND</text>
<polyline points="746.5,262 756.5,262" fill="none" stroke="#800000" stroke-width="1.2" stroke-linecap="butt" stroke-linejoin="miter"/>
<polyline points="756.5,262 767.5,262" fill="none" stroke="#000080" stroke-width="1.12" stroke-linecap="butt" stroke-linejoin="miter"/>
<polyline points="767.5,262 775.75,262" fill="none" stroke="#101010" stroke-width="1.1" stroke-linecap="butt" stroke-linejoin="miter"/>
<rect x="775.75" y="258" width="20.5" height="8" fill="none" stroke="#1414ff" stroke-width="1.2"/>
<text x="776.15" y="265.2" fill="#f5101c" stroke="#f5101c" stroke-width="0.22" textLength="16.2" lengthAdjust="spacing">DNP</text>
<polyline points="796.25,262 806,262" fill="none" stroke="#101010" stroke-width="1.1" stroke-linecap="butt" stroke-linejoin="miter"/>
<polyline points="806,262 925.5,262" fill="none" stroke="#000080" stroke-width="1.12" stroke-linecap="butt" stroke-linejoin="miter"/>
<text x="761.25" y="254.6" fill="#000080" stroke="#000080" stroke-width="0.22" textLength="11.6" lengthAdjust="spacing">R90</text>
<text x="781.25" y="254.6" fill="#000080" stroke="#000080" stroke-width="0.22" textLength="26.4" lengthAdjust="spacing">4.7K/NC</text>
<text x="825.75" y="259.5" fill="#800000" stroke="#800000" stroke-width="0.22" textLength="89.3" lengthAdjust="spacing">PHY1_LED2/CFG_LDO1</text>
<polyline points="925.5,262 935,262" fill="none" stroke="#101010" stroke-width="1.1" stroke-linecap="butt" stroke-linejoin="miter"/>
<rect x="935" y="258" width="20.5" height="8" fill="none" stroke="#1414ff" stroke-width="1.2"/>
<polyline points="955.5,262 965,262" fill="none" stroke="#101010" stroke-width="1.1" stroke-linecap="butt" stroke-linejoin="miter"/>
<text x="925" y="254.6" fill="#000080" stroke="#000080" stroke-width="0.22" textLength="12" lengthAdjust="spacing">R92</text>
<text x="940" y="254.6" fill="#000080" stroke="#000080" stroke-width="0.22" textLength="13.8" lengthAdjust="spacing">4.7K</text>
<polyline points="746.5,271.9 746.5,292.1" fill="none" stroke="#800000" stroke-width="1.2" stroke-linecap="butt" stroke-linejoin="miter"/>
<polyline points="743.5,274.9 743.5,289.1" fill="none" stroke="#800000" stroke-width="1.2" stroke-linecap="butt" stroke-linejoin="miter"/>
<polyline points="740.5,277.6 740.5,286.4" fill="none" stroke="#800000" stroke-width="1.2" stroke-linecap="butt" stroke-linejoin="miter"/>
<polyline points="737.7,280.8 737.7,283.2" fill="none" stroke="#800000" stroke-width="1.2" stroke-linecap="butt" stroke-linejoin="miter"/>
<text x="715.1" y="284.8" fill="#800000" stroke="#800000" stroke-width="0.22" textLength="17.8" lengthAdjust="spacing">GND</text>
<polyline points="746.5,282 756.5,282" fill="none" stroke="#800000" stroke-width="1.2" stroke-linecap="butt" stroke-linejoin="miter"/>
<polyline points="756.5,282 767.5,282" fill="none" stroke="#000080" stroke-width="1.12" stroke-linecap="butt" stroke-linejoin="miter"/>
<polyline points="767.5,282 775.75,282" fill="none" stroke="#101010" stroke-width="1.1" stroke-linecap="butt" stroke-linejoin="miter"/>
<rect x="775.75" y="278" width="20.5" height="8" fill="none" stroke="#1414ff" stroke-width="1.2"/>
<polyline points="796.25,282 806,282" fill="none" stroke="#101010" stroke-width="1.1" stroke-linecap="butt" stroke-linejoin="miter"/>
<polyline points="806,282 925.5,282" fill="none" stroke="#000080" stroke-width="1.12" stroke-linecap="butt" stroke-linejoin="miter"/>
<text x="761.25" y="274.6" fill="#000080" stroke="#000080" stroke-width="0.22" textLength="11.6" lengthAdjust="spacing">R93</text>
<text x="781.25" y="274.6" fill="#000080" stroke="#000080" stroke-width="0.22" textLength="14.4" lengthAdjust="spacing">4.7K</text>
<text x="825.75" y="279.5" fill="#800000" stroke="#800000" stroke-width="0.22" textLength="90" lengthAdjust="spacing">PHY1_LED1/CFG_LDO0</text>
<polyline points="965,262 965,242" fill="none" stroke="#000080" stroke-width="1.12" stroke-linecap="butt" stroke-linejoin="miter"/>
<polyline points="965,242 975,242" fill="none" stroke="#800000" stroke-width="1.2" stroke-linecap="butt" stroke-linejoin="miter"/>
<polyline points="975,236.9 975,247.1" fill="none" stroke="#800000" stroke-width="1.2" stroke-linecap="butt" stroke-linejoin="miter"/>
<text x="977.5" y="244.6" fill="#800000" stroke="#800000" stroke-width="0.22" textLength="55.6" lengthAdjust="spacing">VCC3V3_PHY1</text>
<polyline points="736.25,300.75 736.25,381.75" fill="none" stroke="#000000" stroke-width="1" stroke-linecap="butt" stroke-linejoin="miter"/>
<polyline points="825.5,300.75 825.5,381.75" fill="none" stroke="#000000" stroke-width="1" stroke-linecap="butt" stroke-linejoin="miter"/>
<polyline points="880.5,300.75 880.5,381.75" fill="none" stroke="#000000" stroke-width="1" stroke-linecap="butt" stroke-linejoin="miter"/>
<polyline points="950,300.75 950,381.75" fill="none" stroke="#000000" stroke-width="1" stroke-linecap="butt" stroke-linejoin="miter"/>
<polyline points="736.25,301.25 950,301.25" fill="none" stroke="#000000" stroke-width="1" stroke-linecap="butt" stroke-linejoin="miter"/>
<polyline points="736.25,321.25 950,321.25" fill="none" stroke="#000000" stroke-width="1" stroke-linecap="butt" stroke-linejoin="miter"/>
<polyline points="736.25,341.25 950,341.25" fill="none" stroke="#000000" stroke-width="1" stroke-linecap="butt" stroke-linejoin="miter"/>
<polyline points="736.25,361.25 950,361.25" fill="none" stroke="#000000" stroke-width="1" stroke-linecap="butt" stroke-linejoin="miter"/>
<polyline points="736.25,381.25 950,381.25" fill="none" stroke="#000000" stroke-width="1" stroke-linecap="butt" stroke-linejoin="miter"/>
<text x="741.25" y="315" fill="#000000" stroke="#000000" stroke-width="0.22" textLength="73.2" lengthAdjust="spacing">RGMII Power Source</text>
<text x="835" y="315" fill="#000000" stroke="#000000" stroke-width="0.22" textLength="37.5" lengthAdjust="spacing">CFG_EXT</text>
<text x="885" y="315" fill="#000000" stroke="#000000" stroke-width="0.22" textLength="53.8" lengthAdjust="spacing">CFG_LDO[1:0]</text>
<text x="741.25" y="334.5" fill="#000000" stroke="#000000" stroke-width="0.22" textLength="47.5" lengthAdjust="spacing">External 3.3V</text>
<text x="845.5" y="334.5" fill="#000000" stroke="#000000" stroke-width="0.22" textLength="14.5" lengthAdjust="spacing">1'b1</text>
<text x="900" y="334.5" fill="#000000" stroke="#000000" stroke-width="0.22" textLength="18" lengthAdjust="spacing">2'b00</text>
<text x="741.25" y="354.5" fill="#000000" stroke="#000000" stroke-width="0.22" textLength="78.8" lengthAdjust="spacing">External 1.8V (default)</text>
<text x="845.5" y="354.5" fill="#000000" stroke="#000000" stroke-width="0.22" textLength="14.5" lengthAdjust="spacing">1'b1</text>
<text x="900" y="354.5" fill="#000000" stroke="#000000" stroke-width="0.22" textLength="18" lengthAdjust="spacing">2'b00</text>
<text x="741.25" y="373.9" fill="#000000" stroke="#000000" stroke-width="0.22" textLength="47.5" lengthAdjust="spacing">External 1.8V</text>
<text x="845.5" y="373.9" fill="#000000" stroke="#000000" stroke-width="0.22" textLength="14.5" lengthAdjust="spacing">1'b0</text>
<text x="900" y="373.9" fill="#000000" stroke="#000000" stroke-width="0.22" textLength="18" lengthAdjust="spacing">2'b10</text>
<rect x="756" y="436.3" width="54.9" height="57.2" fill="#fffcd2" stroke="#8c1a1a" stroke-width="1.3"/>
<text x="753.4" y="434.2" fill="#000080" stroke="#000080" stroke-width="0.22" textLength="14.4" lengthAdjust="spacing">U10</text>
<text x="771.5" y="434.2" fill="#000080" stroke="#000080" stroke-width="0.22" textLength="43.3" lengthAdjust="spacing">AZ1143-04F</text>
<text x="763.6" y="449" fill="#000000" stroke="#000000" stroke-width="0.22" textLength="22.2" lengthAdjust="spacing">LINE1</text>
<text x="791.1" y="449" fill="#000000" stroke="#000000" stroke-width="0.22" textLength="11" lengthAdjust="spacing">NC</text>
<polyline points="741.1,446.1 756,446.1" fill="none" stroke="#101010" stroke-width="1.1" stroke-linecap="butt" stroke-linejoin="miter"/>
<polyline points="810.9,446.1 825.8,446.1" fill="none" stroke="#101010" stroke-width="1.1" stroke-linecap="butt" stroke-linejoin="miter"/>
<text x="746" y="443.9" fill="#000000" stroke="#000000" stroke-width="0.22" text-anchor="middle">1</text>
<text x="819.4" y="443.9" fill="#000000" stroke="#000000" stroke-width="0.22">10</text>
<polyline points="661.4,446.1 741.1,446.1" fill="none" stroke="#000080" stroke-width="1.12" stroke-linecap="butt" stroke-linejoin="miter"/>
<text x="661.4" y="443.9" fill="#800000" stroke="#800000" stroke-width="0.22" textLength="66.3" lengthAdjust="spacing">PHY1_RJ45_D1_P</text>
<polyline points="825.8,446.1 925,446.1" fill="none" stroke="#000080" stroke-width="1.12" stroke-linecap="butt" stroke-linejoin="miter"/>
<text x="835.4" y="443.9" fill="#800000" stroke="#800000" stroke-width="0.22" textLength="67" lengthAdjust="spacing">PHY1_RJ45_D1_P</text>
<text x="763.6" y="459" fill="#000000" stroke="#000000" stroke-width="0.22" textLength="22.2" lengthAdjust="spacing">LINE2</text>
<text x="791.1" y="459" fill="#000000" stroke="#000000" stroke-width="0.22" textLength="11" lengthAdjust="spacing">NC</text>
<polyline points="741.1,456.1 756,456.1" fill="none" stroke="#101010" stroke-width="1.1" stroke-linecap="butt" stroke-linejoin="miter"/>
<polyline points="810.9,456.1 825.8,456.1" fill="none" stroke="#101010" stroke-width="1.1" stroke-linecap="butt" stroke-linejoin="miter"/>
<text x="746" y="453.9" fill="#000000" stroke="#000000" stroke-width="0.22" text-anchor="middle">2</text>
<text x="819.4" y="453.9" fill="#000000" stroke="#000000" stroke-width="0.22">9</text>
<polyline points="661.4,456.1 741.1,456.1" fill="none" stroke="#000080" stroke-width="1.12" stroke-linecap="butt" stroke-linejoin="miter"/>
<text x="661.4" y="453.9" fill="#800000" stroke="#800000" stroke-width="0.22" textLength="67.5" lengthAdjust="spacing">PHY1_RJ45_D1_N</text>
<polyline points="825.8,456.1 925,456.1" fill="none" stroke="#000080" stroke-width="1.12" stroke-linecap="butt" stroke-linejoin="miter"/>
<text x="835.4" y="453.9" fill="#800000" stroke="#800000" stroke-width="0.22" textLength="68.2" lengthAdjust="spacing">PHY1_RJ45_D1_N</text>
<text x="763.6" y="468.9" fill="#000000" stroke="#000000" stroke-width="0.22" textLength="18.5" lengthAdjust="spacing">GND</text>
<text x="784.3" y="468.9" fill="#000000" stroke="#000000" stroke-width="0.22" textLength="17.8" lengthAdjust="spacing">GND</text>
<polyline points="741.1,466 756,466" fill="none" stroke="#101010" stroke-width="1.1" stroke-linecap="butt" stroke-linejoin="miter"/>
<polyline points="810.9,466 825.8,466" fill="none" stroke="#101010" stroke-width="1.1" stroke-linecap="butt" stroke-linejoin="miter"/>
<text x="746" y="463.8" fill="#000000" stroke="#000000" stroke-width="0.22" text-anchor="middle">3</text>
<text x="819.4" y="463.8" fill="#000000" stroke="#000000" stroke-width="0.22">8</text>
<text x="763.6" y="478.9" fill="#000000" stroke="#000000" stroke-width="0.22" textLength="22.2" lengthAdjust="spacing">LINE3</text>
<text x="791.1" y="478.9" fill="#000000" stroke="#000000" stroke-width="0.22" textLength="11" lengthAdjust="spacing">NC</text>
<polyline points="741.1,476 756,476" fill="none" stroke="#101010" stroke-width="1.1" stroke-linecap="butt" stroke-linejoin="miter"/>
<polyline points="810.9,476 825.8,476" fill="none" stroke="#101010" stroke-width="1.1" stroke-linecap="butt" stroke-linejoin="miter"/>
<text x="746" y="473.8" fill="#000000" stroke="#000000" stroke-width="0.22" text-anchor="middle">4</text>
<text x="819.4" y="473.8" fill="#000000" stroke="#000000" stroke-width="0.22">7</text>
<polyline points="661.4,476 741.1,476" fill="none" stroke="#000080" stroke-width="1.12" stroke-linecap="butt" stroke-linejoin="miter"/>
<text x="661.4" y="473.8" fill="#800000" stroke="#800000" stroke-width="0.22" textLength="66.3" lengthAdjust="spacing">PHY1_RJ45_D2_P</text>
<polyline points="825.8,476 925,476" fill="none" stroke="#000080" stroke-width="1.12" stroke-linecap="butt" stroke-linejoin="miter"/>
<text x="835.4" y="473.8" fill="#800000" stroke="#800000" stroke-width="0.22" textLength="67" lengthAdjust="spacing">PHY1_RJ45_D2_P</text>
<text x="763.6" y="488.9" fill="#000000" stroke="#000000" stroke-width="0.22" textLength="22.2" lengthAdjust="spacing">LINE4</text>
<text x="791.1" y="488.9" fill="#000000" stroke="#000000" stroke-width="0.22" textLength="11" lengthAdjust="spacing">NC</text>
<polyline points="741.1,486 756,486" fill="none" stroke="#101010" stroke-width="1.1" stroke-linecap="butt" stroke-linejoin="miter"/>
<polyline points="810.9,486 825.8,486" fill="none" stroke="#101010" stroke-width="1.1" stroke-linecap="butt" stroke-linejoin="miter"/>
<text x="746" y="483.8" fill="#000000" stroke="#000000" stroke-width="0.22" text-anchor="middle">5</text>
<text x="819.4" y="483.8" fill="#000000" stroke="#000000" stroke-width="0.22">6</text>
<polyline points="661.4,486 741.1,486" fill="none" stroke="#000080" stroke-width="1.12" stroke-linecap="butt" stroke-linejoin="miter"/>
<text x="661.4" y="483.8" fill="#800000" stroke="#800000" stroke-width="0.22" textLength="67.5" lengthAdjust="spacing">PHY1_RJ45_D2_N</text>
<polyline points="825.8,486 925,486" fill="none" stroke="#000080" stroke-width="1.12" stroke-linecap="butt" stroke-linejoin="miter"/>
<text x="835.4" y="483.8" fill="#800000" stroke="#800000" stroke-width="0.22" textLength="68.2" lengthAdjust="spacing">PHY1_RJ45_D2_N</text>
<rect x="756" y="495.6" width="54.9" height="57.4" fill="#fffcd2" stroke="#8c1a1a" stroke-width="1.3"/>
<text x="753.4" y="560.8" fill="#000080" stroke="#000080" stroke-width="0.22" textLength="14.4" lengthAdjust="spacing">U11</text>
<text x="771.5" y="560.8" fill="#000080" stroke="#000080" stroke-width="0.22" textLength="43.3" lengthAdjust="spacing">AZ1143-04F</text>
<text x="763.6" y="508.5" fill="#000000" stroke="#000000" stroke-width="0.22" textLength="22.2" lengthAdjust="spacing">LINE1</text>
<text x="791.1" y="508.5" fill="#000000" stroke="#000000" stroke-width="0.22" textLength="11" lengthAdjust="spacing">NC</text>
<polyline points="741.1,505.6 756,505.6" fill="none" stroke="#101010" stroke-width="1.1" stroke-linecap="butt" stroke-linejoin="miter"/>
<polyline points="810.9,505.6 825.8,505.6" fill="none" stroke="#101010" stroke-width="1.1" stroke-linecap="butt" stroke-linejoin="miter"/>
<text x="746" y="503.4" fill="#000000" stroke="#000000" stroke-width="0.22" text-anchor="middle">1</text>
<text x="819.4" y="503.4" fill="#000000" stroke="#000000" stroke-width="0.22">10</text>
<polyline points="661.4,505.6 741.1,505.6" fill="none" stroke="#000080" stroke-width="1.12" stroke-linecap="butt" stroke-linejoin="miter"/>
<text x="661.4" y="503.4" fill="#800000" stroke="#800000" stroke-width="0.22" textLength="66.3" lengthAdjust="spacing">PHY1_RJ45_D3_P</text>
<polyline points="825.8,505.6 925,505.6" fill="none" stroke="#000080" stroke-width="1.12" stroke-linecap="butt" stroke-linejoin="miter"/>
<text x="835.4" y="503.4" fill="#800000" stroke="#800000" stroke-width="0.22" textLength="67" lengthAdjust="spacing">PHY1_RJ45_D3_P</text>
<text x="763.6" y="518.5" fill="#000000" stroke="#000000" stroke-width="0.22" textLength="22.2" lengthAdjust="spacing">LINE2</text>
<text x="791.1" y="518.5" fill="#000000" stroke="#000000" stroke-width="0.22" textLength="11" lengthAdjust="spacing">NC</text>
<polyline points="741.1,515.6 756,515.6" fill="none" stroke="#101010" stroke-width="1.1" stroke-linecap="butt" stroke-linejoin="miter"/>
<polyline points="810.9,515.6 825.8,515.6" fill="none" stroke="#101010" stroke-width="1.1" stroke-linecap="butt" stroke-linejoin="miter"/>
<text x="746" y="513.4" fill="#000000" stroke="#000000" stroke-width="0.22" text-anchor="middle">2</text>
<text x="819.4" y="513.4" fill="#000000" stroke="#000000" stroke-width="0.22">9</text>
<polyline points="661.4,515.6 741.1,515.6" fill="none" stroke="#000080" stroke-width="1.12" stroke-linecap="butt" stroke-linejoin="miter"/>
<text x="661.4" y="513.4" fill="#800000" stroke="#800000" stroke-width="0.22" textLength="67.5" lengthAdjust="spacing">PHY1_RJ45_D3_N</text>
<polyline points="825.8,515.6 925,515.6" fill="none" stroke="#000080" stroke-width="1.12" stroke-linecap="butt" stroke-linejoin="miter"/>
<text x="835.4" y="513.4" fill="#800000" stroke="#800000" stroke-width="0.22" textLength="68.2" lengthAdjust="spacing">PHY1_RJ45_D3_N</text>
<text x="763.6" y="528.5" fill="#000000" stroke="#000000" stroke-width="0.22" textLength="18.5" lengthAdjust="spacing">GND</text>
<text x="784.3" y="528.5" fill="#000000" stroke="#000000" stroke-width="0.22" textLength="17.8" lengthAdjust="spacing">GND</text>
<polyline points="741.1,525.6 756,525.6" fill="none" stroke="#101010" stroke-width="1.1" stroke-linecap="butt" stroke-linejoin="miter"/>
<polyline points="810.9,525.6 825.8,525.6" fill="none" stroke="#101010" stroke-width="1.1" stroke-linecap="butt" stroke-linejoin="miter"/>
<text x="746" y="523.4" fill="#000000" stroke="#000000" stroke-width="0.22" text-anchor="middle">3</text>
<text x="819.4" y="523.4" fill="#000000" stroke="#000000" stroke-width="0.22">8</text>
<text x="763.6" y="538.5" fill="#000000" stroke="#000000" stroke-width="0.22" textLength="22.2" lengthAdjust="spacing">LINE3</text>
<text x="791.1" y="538.5" fill="#000000" stroke="#000000" stroke-width="0.22" textLength="11" lengthAdjust="spacing">NC</text>
<polyline points="741.1,535.6 756,535.6" fill="none" stroke="#101010" stroke-width="1.1" stroke-linecap="butt" stroke-linejoin="miter"/>
<polyline points="810.9,535.6 825.8,535.6" fill="none" stroke="#101010" stroke-width="1.1" stroke-linecap="butt" stroke-linejoin="miter"/>
<text x="746" y="533.4" fill="#000000" stroke="#000000" stroke-width="0.22" text-anchor="middle">4</text>
<text x="819.4" y="533.4" fill="#000000" stroke="#000000" stroke-width="0.22">7</text>
<polyline points="661.4,535.6 741.1,535.6" fill="none" stroke="#000080" stroke-width="1.12" stroke-linecap="butt" stroke-linejoin="miter"/>
<text x="661.4" y="533.4" fill="#800000" stroke="#800000" stroke-width="0.22" textLength="66.3" lengthAdjust="spacing">PHY1_RJ45_D4_P</text>
<polyline points="825.8,535.6 925,535.6" fill="none" stroke="#000080" stroke-width="1.12" stroke-linecap="butt" stroke-linejoin="miter"/>
<text x="835.4" y="533.4" fill="#800000" stroke="#800000" stroke-width="0.22" textLength="67" lengthAdjust="spacing">PHY1_RJ45_D4_P</text>
<text x="763.6" y="548.5" fill="#000000" stroke="#000000" stroke-width="0.22" textLength="22.2" lengthAdjust="spacing">LINE4</text>
<text x="791.1" y="548.5" fill="#000000" stroke="#000000" stroke-width="0.22" textLength="11" lengthAdjust="spacing">NC</text>
<polyline points="741.1,545.6 756,545.6" fill="none" stroke="#101010" stroke-width="1.1" stroke-linecap="butt" stroke-linejoin="miter"/>
<polyline points="810.9,545.6 825.8,545.6" fill="none" stroke="#101010" stroke-width="1.1" stroke-linecap="butt" stroke-linejoin="miter"/>
<text x="746" y="543.4" fill="#000000" stroke="#000000" stroke-width="0.22" text-anchor="middle">5</text>
<text x="819.4" y="543.4" fill="#000000" stroke="#000000" stroke-width="0.22">6</text>
<polyline points="661.4,545.6 741.1,545.6" fill="none" stroke="#000080" stroke-width="1.12" stroke-linecap="butt" stroke-linejoin="miter"/>
<text x="661.4" y="543.4" fill="#800000" stroke="#800000" stroke-width="0.22" textLength="67.5" lengthAdjust="spacing">PHY1_RJ45_D4_N</text>
<polyline points="825.8,545.6 925,545.6" fill="none" stroke="#000080" stroke-width="1.12" stroke-linecap="butt" stroke-linejoin="miter"/>
<text x="835.4" y="543.4" fill="#800000" stroke="#800000" stroke-width="0.22" textLength="68.2" lengthAdjust="spacing">PHY1_RJ45_D4_N</text>
<polyline points="726.1,431 746.3,431" fill="none" stroke="#800000" stroke-width="1.2" stroke-linecap="butt" stroke-linejoin="miter"/>
<polyline points="729.55,428 742.85,428" fill="none" stroke="#800000" stroke-width="1.2" stroke-linecap="butt" stroke-linejoin="miter"/>
<polyline points="732.7,425 739.7,425" fill="none" stroke="#800000" stroke-width="1.2" stroke-linecap="butt" stroke-linejoin="miter"/>
<polyline points="734.95,422.3 737.45,422.3" fill="none" stroke="#800000" stroke-width="1.2" stroke-linecap="butt" stroke-linejoin="miter"/>
<text x="726" y="418.8" fill="#800000" stroke="#800000" stroke-width="0.22" textLength="18.1" lengthAdjust="spacing">GND</text>
<polyline points="736.2,431 736.2,441" fill="none" stroke="#800000" stroke-width="1.2" stroke-linecap="butt" stroke-linejoin="miter"/>
<polyline points="736.2,441 736.2,466 741.1,466" fill="none" stroke="#000080" stroke-width="1.12" stroke-linecap="butt" stroke-linejoin="miter"/>
<polyline points="820.8,425.9 841,425.9" fill="none" stroke="#800000" stroke-width="1.2" stroke-linecap="butt" stroke-linejoin="miter"/>
<polyline points="824.25,422.9 837.55,422.9" fill="none" stroke="#800000" stroke-width="1.2" stroke-linecap="butt" stroke-linejoin="miter"/>
<polyline points="827.4,419.9 834.4,419.9" fill="none" stroke="#800000" stroke-width="1.2" stroke-linecap="butt" stroke-linejoin="miter"/>
<polyline points="829.65,417.2 832.15,417.2" fill="none" stroke="#800000" stroke-width="1.2" stroke-linecap="butt" stroke-linejoin="miter"/>
<text x="820.7" y="413.7" fill="#800000" stroke="#800000" stroke-width="0.22" textLength="18.1" lengthAdjust="spacing">GND</text>
<polyline points="830.9,425.9 830.9,436" fill="none" stroke="#800000" stroke-width="1.2" stroke-linecap="butt" stroke-linejoin="miter"/>
<polyline points="830.9,436 830.9,466 825.8,466" fill="none" stroke="#000080" stroke-width="1.12" stroke-linecap="butt" stroke-linejoin="miter"/>
<polyline points="741.1,525.6 736.2,525.6 736.2,550" fill="none" stroke="#000080" stroke-width="1.12" stroke-linecap="butt" stroke-linejoin="miter"/>
<polyline points="736.2,550 736.2,560" fill="none" stroke="#800000" stroke-width="1.2" stroke-linecap="butt" stroke-linejoin="miter"/>
<polyline points="726,560 746.4,560" fill="none" stroke="#800000" stroke-width="1.2" stroke-linecap="butt" stroke-linejoin="miter"/>
<polyline points="729.1,563.05 743.3,563.05" fill="none" stroke="#800000" stroke-width="1.2" stroke-linecap="butt" stroke-linejoin="miter"/>
<polyline points="731.8,566.1 740.6,566.1" fill="none" stroke="#800000" stroke-width="1.2" stroke-linecap="butt" stroke-linejoin="miter"/>
<polyline points="734.95,569.1 737.45,569.1" fill="none" stroke="#800000" stroke-width="1.2" stroke-linecap="butt" stroke-linejoin="miter"/>
<text x="726.9" y="577.4" fill="#800000" stroke="#800000" stroke-width="0.22" textLength="17.8" lengthAdjust="spacing">GND</text>
<polyline points="825.8,525.6 830.9,525.6 830.9,565.5" fill="none" stroke="#000080" stroke-width="1.12" stroke-linecap="butt" stroke-linejoin="miter"/>
<polyline points="830.9,565.5 830.9,575.5" fill="none" stroke="#800000" stroke-width="1.2" stroke-linecap="butt" stroke-linejoin="miter"/>
<polyline points="820.7,575.5 841.1,575.5" fill="none" stroke="#800000" stroke-width="1.2" stroke-linecap="butt" stroke-linejoin="miter"/>
<polyline points="823.8,578.55 838,578.55" fill="none" stroke="#800000" stroke-width="1.2" stroke-linecap="butt" stroke-linejoin="miter"/>
<polyline points="826.5,581.6 835.3,581.6" fill="none" stroke="#800000" stroke-width="1.2" stroke-linecap="butt" stroke-linejoin="miter"/>
<polyline points="829.65,584.6 832.15,584.6" fill="none" stroke="#800000" stroke-width="1.2" stroke-linecap="butt" stroke-linejoin="miter"/>
<text x="821.6" y="592.9" fill="#800000" stroke="#800000" stroke-width="0.22" textLength="17.8" lengthAdjust="spacing">GND</text>
<rect x="945.5" y="436" width="60" height="148.8" fill="#fffcd2" stroke="#8c1a1a" stroke-width="1.3"/>
<text x="945.3" y="433.8" fill="#000080" stroke="#000080" stroke-width="0.22" textLength="6.4" lengthAdjust="spacing">J7</text>
<text x="945.8" y="592.6" fill="#000080" stroke="#000080" stroke-width="0.22" textLength="62.9" lengthAdjust="spacing">RJ45(ATK911131A)</text>
<polyline points="925,446.1 945.5,446.1" fill="none" stroke="#101010" stroke-width="1.1" stroke-linecap="butt" stroke-linejoin="miter"/>
<path d="M915,438.8 L919,438.8 L921.1,436.7 L925.4,436.7 L927.5,438.8 L931.5,438.8" fill="none" stroke="#f5101c" stroke-width="1.25" stroke-linejoin="round"/>
<path d="M910.6,445.9 L915,441 L919,441 L921.1,443.2 L925.4,443.2 L927.5,441 L931.5,441" fill="none" stroke="#f5101c" stroke-width="1.25" stroke-linejoin="round"/>
<text x="934.6" y="443.8" fill="#000000" stroke="#000000" stroke-width="0.22">1</text>
<polygon points="938.9,443.9 931.7,446.1 938.9,448.3" fill="#fefbf6" stroke="#000000" stroke-width="1.05" stroke-linejoin="miter"/>
<polygon points="938.9,443.9 945.9,446.1 938.9,448.3" fill="#fefbf6" stroke="#000000" stroke-width="1.05" stroke-linejoin="miter"/>
<text x="952.7" y="449.4" fill="#000000" stroke="#000000" stroke-width="0.22" textLength="18.4" lengthAdjust="spacing">TX1+</text>
<polyline points="925,456.1 945.5,456.1" fill="none" stroke="#101010" stroke-width="1.1" stroke-linecap="butt" stroke-linejoin="miter"/>
<path d="M915,448.8 L919,448.8 L921.1,446.7 L925.4,446.7 L927.5,448.8 L931.5,448.8" fill="none" stroke="#f5101c" stroke-width="1.25" stroke-linejoin="round"/>
<path d="M910.6,455.9 L915,451 L919,451 L921.1,453.2 L925.4,453.2 L927.5,451 L931.5,451" fill="none" stroke="#f5101c" stroke-width="1.25" stroke-linejoin="round"/>
<text x="934.6" y="453.8" fill="#000000" stroke="#000000" stroke-width="0.22">2</text>
<polygon points="938.9,453.9 931.7,456.1 938.9,458.3" fill="#fefbf6" stroke="#000000" stroke-width="1.05" stroke-linejoin="miter"/>
<polygon points="938.9,453.9 945.9,456.1 938.9,458.3" fill="#fefbf6" stroke="#000000" stroke-width="1.05" stroke-linejoin="miter"/>
<text x="952.7" y="459.4" fill="#000000" stroke="#000000" stroke-width="0.22" textLength="16.4" lengthAdjust="spacing">TX1-</text>
<polyline points="925,476 945.5,476" fill="none" stroke="#101010" stroke-width="1.1" stroke-linecap="butt" stroke-linejoin="miter"/>
<path d="M915,468.7 L919,468.7 L921.1,466.6 L925.4,466.6 L927.5,468.7 L931.5,468.7" fill="none" stroke="#f5101c" stroke-width="1.25" stroke-linejoin="round"/>
<path d="M910.6,475.8 L915,470.9 L919,470.9 L921.1,473.1 L925.4,473.1 L927.5,470.9 L931.5,470.9" fill="none" stroke="#f5101c" stroke-width="1.25" stroke-linejoin="round"/>
<text x="934.6" y="473.7" fill="#000000" stroke="#000000" stroke-width="0.22">3</text>
<polygon points="938.9,473.8 931.7,476 938.9,478.2" fill="#fefbf6" stroke="#000000" stroke-width="1.05" stroke-linejoin="miter"/>
<polygon points="938.9,473.8 945.9,476 938.9,478.2" fill="#fefbf6" stroke="#000000" stroke-width="1.05" stroke-linejoin="miter"/>
<text x="952.7" y="479.3" fill="#000000" stroke="#000000" stroke-width="0.22" textLength="18.4" lengthAdjust="spacing">TX2+</text>
<polyline points="925,486 945.5,486" fill="none" stroke="#101010" stroke-width="1.1" stroke-linecap="butt" stroke-linejoin="miter"/>
<path d="M915,478.7 L919,478.7 L921.1,476.6 L925.4,476.6 L927.5,478.7 L931.5,478.7" fill="none" stroke="#f5101c" stroke-width="1.25" stroke-linejoin="round"/>
<path d="M910.6,485.8 L915,480.9 L919,480.9 L921.1,483.1 L925.4,483.1 L927.5,480.9 L931.5,480.9" fill="none" stroke="#f5101c" stroke-width="1.25" stroke-linejoin="round"/>
<text x="934.6" y="483.7" fill="#000000" stroke="#000000" stroke-width="0.22">4</text>
<polygon points="938.9,483.8 931.7,486 938.9,488.2" fill="#fefbf6" stroke="#000000" stroke-width="1.05" stroke-linejoin="miter"/>
<polygon points="938.9,483.8 945.9,486 938.9,488.2" fill="#fefbf6" stroke="#000000" stroke-width="1.05" stroke-linejoin="miter"/>
<text x="952.7" y="489.3" fill="#000000" stroke="#000000" stroke-width="0.22" textLength="16.4" lengthAdjust="spacing">TX2-</text>
<polyline points="925,505.6 945.5,505.6" fill="none" stroke="#101010" stroke-width="1.1" stroke-linecap="butt" stroke-linejoin="miter"/>
<path d="M915,498.3 L919,498.3 L921.1,496.2 L925.4,496.2 L927.5,498.3 L931.5,498.3" fill="none" stroke="#f5101c" stroke-width="1.25" stroke-linejoin="round"/>
<path d="M910.6,505.4 L915,500.5 L919,500.5 L921.1,502.7 L925.4,502.7 L927.5,500.5 L931.5,500.5" fill="none" stroke="#f5101c" stroke-width="1.25" stroke-linejoin="round"/>
<text x="934.6" y="503.3" fill="#000000" stroke="#000000" stroke-width="0.22">7</text>
<polygon points="938.9,503.4 931.7,505.6 938.9,507.8" fill="#fefbf6" stroke="#000000" stroke-width="1.05" stroke-linejoin="miter"/>
<polygon points="938.9,503.4 945.9,505.6 938.9,507.8" fill="#fefbf6" stroke="#000000" stroke-width="1.05" stroke-linejoin="miter"/>
<text x="952.7" y="508.9" fill="#000000" stroke="#000000" stroke-width="0.22" textLength="18.4" lengthAdjust="spacing">TX3+</text>
<polyline points="925,515.6 945.5,515.6" fill="none" stroke="#101010" stroke-width="1.1" stroke-linecap="butt" stroke-linejoin="miter"/>
<path d="M915,508.3 L919,508.3 L921.1,506.2 L925.4,506.2 L927.5,508.3 L931.5,508.3" fill="none" stroke="#f5101c" stroke-width="1.25" stroke-linejoin="round"/>
<path d="M910.6,515.4 L915,510.5 L919,510.5 L921.1,512.7 L925.4,512.7 L927.5,510.5 L931.5,510.5" fill="none" stroke="#f5101c" stroke-width="1.25" stroke-linejoin="round"/>
<text x="934.6" y="513.3" fill="#000000" stroke="#000000" stroke-width="0.22">8</text>
<polygon points="938.9,513.4 931.7,515.6 938.9,517.8" fill="#fefbf6" stroke="#000000" stroke-width="1.05" stroke-linejoin="miter"/>
<polygon points="938.9,513.4 945.9,515.6 938.9,517.8" fill="#fefbf6" stroke="#000000" stroke-width="1.05" stroke-linejoin="miter"/>
<text x="952.7" y="518.9" fill="#000000" stroke="#000000" stroke-width="0.22" textLength="16.4" lengthAdjust="spacing">TX3-</text>
<polyline points="925,535.6 945.5,535.6" fill="none" stroke="#101010" stroke-width="1.1" stroke-linecap="butt" stroke-linejoin="miter"/>
<path d="M915,528.3 L919,528.3 L921.1,526.2 L925.4,526.2 L927.5,528.3 L931.5,528.3" fill="none" stroke="#f5101c" stroke-width="1.25" stroke-linejoin="round"/>
<path d="M910.6,535.4 L915,530.5 L919,530.5 L921.1,532.7 L925.4,532.7 L927.5,530.5 L931.5,530.5" fill="none" stroke="#f5101c" stroke-width="1.25" stroke-linejoin="round"/>
<text x="934.6" y="533.3" fill="#000000" stroke="#000000" stroke-width="0.22">9</text>
<polygon points="938.9,533.4 931.7,535.6 938.9,537.8" fill="#fefbf6" stroke="#000000" stroke-width="1.05" stroke-linejoin="miter"/>
<polygon points="938.9,533.4 945.9,535.6 938.9,537.8" fill="#fefbf6" stroke="#000000" stroke-width="1.05" stroke-linejoin="miter"/>
<text x="952.7" y="538.9" fill="#000000" stroke="#000000" stroke-width="0.22" textLength="18.4" lengthAdjust="spacing">TX4+</text>
<polyline points="925,545.6 945.5,545.6" fill="none" stroke="#101010" stroke-width="1.1" stroke-linecap="butt" stroke-linejoin="miter"/>
<path d="M915,538.3 L919,538.3 L921.1,536.2 L925.4,536.2 L927.5,538.3 L931.5,538.3" fill="none" stroke="#f5101c" stroke-width="1.25" stroke-linejoin="round"/>
<path d="M910.6,545.4 L915,540.5 L919,540.5 L921.1,542.7 L925.4,542.7 L927.5,540.5 L931.5,540.5" fill="none" stroke="#f5101c" stroke-width="1.25" stroke-linejoin="round"/>
<text x="930.6" y="543.3" fill="#000000" stroke="#000000" stroke-width="0.22">10</text>
<polygon points="938.9,543.4 931.7,545.6 938.9,547.8" fill="#fefbf6" stroke="#000000" stroke-width="1.05" stroke-linejoin="miter"/>
<polygon points="938.9,543.4 945.9,545.6 938.9,547.8" fill="#fefbf6" stroke="#000000" stroke-width="1.05" stroke-linejoin="miter"/>
<text x="952.7" y="548.9" fill="#000000" stroke="#000000" stroke-width="0.22" textLength="16.4" lengthAdjust="spacing">TX4-</text>
<text x="983" y="458.8" fill="#000000" stroke="#000000" stroke-width="0.22" textLength="14.4" lengthAdjust="spacing">CT1</text>
<text x="983" y="468.7" fill="#000000" stroke="#000000" stroke-width="0.22" textLength="14.4" lengthAdjust="spacing">CT2</text>
<text x="979" y="498.2" fill="#000000" stroke="#000000" stroke-width="0.22" textLength="18.4" lengthAdjust="spacing">GND</text>
<text x="979" y="508.2" fill="#000000" stroke="#000000" stroke-width="0.22" textLength="18.4" lengthAdjust="spacing">GND</text>
<text x="952.5" y="568" fill="#000000" stroke="#000000" stroke-width="0.22" textLength="10.6" lengthAdjust="spacing">GC</text>
<text x="952.5" y="578.2" fill="#000000" stroke="#000000" stroke-width="0.22" textLength="10.6" lengthAdjust="spacing">YA</text>
<text x="985" y="568" fill="#000000" stroke="#000000" stroke-width="0.22" textLength="11.6" lengthAdjust="spacing">GA</text>
<text x="985.8" y="578.2" fill="#000000" stroke="#000000" stroke-width="0.22" textLength="10.6" lengthAdjust="spacing">YC</text>
<polyline points="967.2,565.4 983.7,565.4" fill="none" stroke="#1414ff" stroke-width="1.2" stroke-linecap="butt" stroke-linejoin="miter"/>
<polygon points="979.5,561.4 971.8,565.4 979.5,569.4" fill="#fffcd2" stroke="#1414ff" stroke-width="1.2"/>
<polyline points="971.8,561.2 971.8,569.6" fill="none" stroke="#1414ff" stroke-width="1.2" stroke-linecap="butt" stroke-linejoin="miter"/>
<polyline points="967.2,575.5 983.7,575.5" fill="none" stroke="#1414ff" stroke-width="1.2" stroke-linecap="butt" stroke-linejoin="miter"/>
<polygon points="971.8,571.5 979.5,575.5 971.8,579.5" fill="#fffcd2" stroke="#1414ff" stroke-width="1.2"/>
<polyline points="979.5,571.3 979.5,579.7" fill="none" stroke="#1414ff" stroke-width="1.2" stroke-linecap="butt" stroke-linejoin="miter"/>
<polyline points="1005.5,456.1 1025.5,456.1" fill="none" stroke="#101010" stroke-width="1.1" stroke-linecap="butt" stroke-linejoin="miter"/>
<polyline points="1025.5,456.1 1059.7,456.1 1059.7,466" fill="none" stroke="#000080" stroke-width="1.12" stroke-linecap="butt" stroke-linejoin="miter"/>
<polyline points="1005.5,466 1025.5,466" fill="none" stroke="#101010" stroke-width="1.1" stroke-linecap="butt" stroke-linejoin="miter"/>
<polyline points="1025.5,466 1059.7,466" fill="none" stroke="#000080" stroke-width="1.12" stroke-linecap="butt" stroke-linejoin="miter"/>
<text x="1013" y="453.7" fill="#000000" stroke="#000000" stroke-width="0.22">5</text>
<text x="1013" y="463.7" fill="#000000" stroke="#000000" stroke-width="0.22">6</text>
<polyline points="1059.7,466 1059.7,478.2" fill="none" stroke="#101010" stroke-width="1.1" stroke-linecap="butt" stroke-linejoin="miter"/>
<polyline points="1059.7,483 1059.7,487" fill="none" stroke="#101010" stroke-width="1.1" stroke-linecap="butt" stroke-linejoin="miter"/>
<polyline points="1054.4,478.2 1065,478.2" fill="none" stroke="#1414ff" stroke-width="1.35" stroke-linecap="butt" stroke-linejoin="miter"/>
<polyline points="1054.4,483 1065,483" fill="none" stroke="#1414ff" stroke-width="1.35" stroke-linecap="butt" stroke-linejoin="miter"/>
<polyline points="1059.7,487 1059.7,508" fill="none" stroke="#000080" stroke-width="1.12" stroke-linecap="butt" stroke-linejoin="miter"/>
<polyline points="1059.7,508 1059.7,518" fill="none" stroke="#800000" stroke-width="1.2" stroke-linecap="butt" stroke-linejoin="miter"/>
<polyline points="1049.5,518 1069.9,518" fill="none" stroke="#800000" stroke-width="1.2" stroke-linecap="butt" stroke-linejoin="miter"/>
<polyline points="1052.6,521.05 1066.8,521.05" fill="none" stroke="#800000" stroke-width="1.2" stroke-linecap="butt" stroke-linejoin="miter"/>
<polyline points="1055.3,524.1 1064.1,524.1" fill="none" stroke="#800000" stroke-width="1.2" stroke-linecap="butt" stroke-linejoin="miter"/>
<polyline points="1058.45,527.1 1060.95,527.1" fill="none" stroke="#800000" stroke-width="1.2" stroke-linecap="butt" stroke-linejoin="miter"/>
<text x="1050.4" y="535.4" fill="#800000" stroke="#800000" stroke-width="0.22" textLength="17.8" lengthAdjust="spacing">GND</text>
<text x="1060" y="475.7" fill="#000080" stroke="#000080" stroke-width="0.22" textLength="12.3" lengthAdjust="spacing">C61</text>
<text x="1060.3" y="491.8" fill="#000080" stroke="#000080" stroke-width="0.22" textLength="10.1" lengthAdjust="spacing">104</text>
<polyline points="1005.5,495.7 1024.8,495.7 1024.8,505.6" fill="none" stroke="#101010" stroke-width="1.1" stroke-linecap="butt" stroke-linejoin="miter"/>
<polyline points="1005.5,505.6 1024.8,505.6" fill="none" stroke="#101010" stroke-width="1.1" stroke-linecap="butt" stroke-linejoin="miter"/>
<polyline points="1024.8,505.6 1024.8,518" fill="none" stroke="#800000" stroke-width="1.2" stroke-linecap="butt" stroke-linejoin="miter"/>
<polyline points="1014.6,518 1035,518" fill="none" stroke="#800000" stroke-width="1.2" stroke-linecap="butt" stroke-linejoin="miter"/>
<polyline points="1017.7,521.05 1031.9,521.05" fill="none" stroke="#800000" stroke-width="1.2" stroke-linecap="butt" stroke-linejoin="miter"/>
<polyline points="1020.4,524.1 1029.2,524.1" fill="none" stroke="#800000" stroke-width="1.2" stroke-linecap="butt" stroke-linejoin="miter"/>
<polyline points="1023.55,527.1 1026.05,527.1" fill="none" stroke="#800000" stroke-width="1.2" stroke-linecap="butt" stroke-linejoin="miter"/>
<text x="1015.5" y="535.4" fill="#800000" stroke="#800000" stroke-width="0.22" textLength="17.8" lengthAdjust="spacing">GND</text>
<text x="1013.4" y="493.4" fill="#000000" stroke="#000000" stroke-width="0.22">16</text>
<text x="1013.4" y="503.4" fill="#000000" stroke="#000000" stroke-width="0.22">15</text>
<polyline points="1005.5,565.4 1025.5,565.4" fill="none" stroke="#101010" stroke-width="1.1" stroke-linecap="butt" stroke-linejoin="miter"/>
<polyline points="1025.5,565.4 1114.5,565.4" fill="none" stroke="#000080" stroke-width="1.12" stroke-linecap="butt" stroke-linejoin="miter"/>
<text x="1013.3" y="563" fill="#000000" stroke="#000000" stroke-width="0.22" textLength="6.2" lengthAdjust="spacing">11</text>
<text x="1024.6" y="563" fill="#800000" stroke="#800000" stroke-width="0.22" textLength="90" lengthAdjust="spacing">PHY1_LED1/CFG_LDO0</text>
<polyline points="1005.5,575.5 1025.5,575.5" fill="none" stroke="#101010" stroke-width="1.1" stroke-linecap="butt" stroke-linejoin="miter"/>
<polyline points="1025.5,575.5 1114.5,575.5" fill="none" stroke="#000080" stroke-width="1.12" stroke-linecap="butt" stroke-linejoin="miter"/>
<text x="1013.3" y="573.1" fill="#000000" stroke="#000000" stroke-width="0.22" textLength="6.2" lengthAdjust="spacing">13</text>
<text x="1024.6" y="573.1" fill="#800000" stroke="#800000" stroke-width="0.22" textLength="90" lengthAdjust="spacing">PHY1_LED2/CFG_LDO1</text>
<polyline points="870.6,555.3 870.6,575.5" fill="none" stroke="#800000" stroke-width="1.2" stroke-linecap="butt" stroke-linejoin="miter"/>
<polyline points="867.6,558.3 867.6,572.5" fill="none" stroke="#800000" stroke-width="1.2" stroke-linecap="butt" stroke-linejoin="miter"/>
<polyline points="864.6,561 864.6,569.8" fill="none" stroke="#800000" stroke-width="1.2" stroke-linecap="butt" stroke-linejoin="miter"/>
<polyline points="861.8,564.2 861.8,566.6" fill="none" stroke="#800000" stroke-width="1.2" stroke-linecap="butt" stroke-linejoin="miter"/>
<text x="839.2" y="568.2" fill="#800000" stroke="#800000" stroke-width="0.22" textLength="17.8" lengthAdjust="spacing">GND</text>
<polyline points="870.6,565.4 879.8,565.4" fill="none" stroke="#800000" stroke-width="1.2" stroke-linecap="butt" stroke-linejoin="miter"/>
<polyline points="879.8,565.4 896.2,565.4" fill="none" stroke="#000080" stroke-width="1.12" stroke-linecap="butt" stroke-linejoin="miter"/>
<polyline points="896.2,565.4 905.1,565.4" fill="none" stroke="#101010" stroke-width="1.1" stroke-linecap="butt" stroke-linejoin="miter"/>
<rect x="905.1" y="561.4" width="20.4" height="8" fill="none" stroke="#1414ff" stroke-width="1.2"/>
<polyline points="925.5,565.4 945.5,565.4" fill="none" stroke="#101010" stroke-width="1.1" stroke-linecap="butt" stroke-linejoin="miter"/>
<polyline points="875.5,580.5 875.5,575.5 896.2,575.5" fill="none" stroke="#000080" stroke-width="1.12" stroke-linecap="butt" stroke-linejoin="miter"/>
<polyline points="896.2,575.5 905.1,575.5" fill="none" stroke="#101010" stroke-width="1.1" stroke-linecap="butt" stroke-linejoin="miter"/>
<rect x="905.1" y="571.5" width="20.4" height="8" fill="none" stroke="#1414ff" stroke-width="1.2"/>
<polyline points="925.5,575.5 945.5,575.5" fill="none" stroke="#101010" stroke-width="1.1" stroke-linecap="butt" stroke-linejoin="miter"/>
<polyline points="875.5,580.5 875.5,585.1" fill="none" stroke="#800000" stroke-width="1.2" stroke-linecap="butt" stroke-linejoin="miter"/>
<polyline points="870.5,585.1 880.8,585.1" fill="none" stroke="#800000" stroke-width="1.2" stroke-linecap="butt" stroke-linejoin="miter"/>
<text x="845.8" y="592.5" fill="#800000" stroke="#800000" stroke-width="0.22" textLength="55.5" lengthAdjust="spacing">VCC3V3_PHY1</text>
<text x="885" y="557.8" fill="#000080" stroke="#000080" stroke-width="0.22" textLength="18.2" lengthAdjust="spacing">R100</text>
<text x="905.4" y="557.8" fill="#000080" stroke="#000080" stroke-width="0.22" textLength="18.2" lengthAdjust="spacing">510R</text>
<text x="929.5" y="562.8" fill="#000000" stroke="#000000" stroke-width="0.22" textLength="7.5" lengthAdjust="spacing">12</text>
<text x="929.5" y="572.9" fill="#000000" stroke="#000000" stroke-width="0.22" textLength="7.5" lengthAdjust="spacing">14</text>
<text x="910.7" y="588" fill="#000080" stroke="#000080" stroke-width="0.22" textLength="17.5" lengthAdjust="spacing">R102</text>
<text x="905.4" y="597.6" fill="#000080" stroke="#000080" stroke-width="0.22" textLength="18.2" lengthAdjust="spacing">510R</text>
<text x="317.8" y="637.8" fill="#800000" stroke="#800000" stroke-width="0.22" textLength="98.8" lengthAdjust="spacing">GMAC1_MCLKINOUT_M1</text>
<polyline points="317.8,640.2 433,640.2" fill="none" stroke="#000080" stroke-width="1.12" stroke-linecap="butt" stroke-linejoin="miter"/>
<polyline points="433,640.2 442.4,640.2" fill="none" stroke="#101010" stroke-width="1.1" stroke-linecap="butt" stroke-linejoin="miter"/>
<text x="437.8" y="633.2" fill="#000080" stroke="#000080" stroke-width="0.22" textLength="26.7" lengthAdjust="spacing">100R 1%</text>
<rect x="442.4" y="636.4" width="20.5" height="8" fill="none" stroke="#1414ff" stroke-width="1.35"/>
<text x="472" y="637.8" fill="#800000" stroke="#800000" stroke-width="0.22" textLength="72.2" lengthAdjust="spacing">PHY1_CLKOUT125</text>
<polyline points="472,640.2 545,640.2" fill="none" stroke="#000080" stroke-width="1.12" stroke-linecap="butt" stroke-linejoin="miter"/>
<text x="111.2" y="643.8" fill="#000080" stroke="#000080" stroke-width="0.22" textLength="12.3" lengthAdjust="spacing">C64</text>
<text x="139" y="643.8" fill="#000080" stroke="#000080" stroke-width="0.22" textLength="11.5" lengthAdjust="spacing">4pF</text>
<polyline points="86,636.5 86,641" fill="none" stroke="#800000" stroke-width="1.2" stroke-linecap="butt" stroke-linejoin="miter"/>
<polyline points="89,634.5 89,641" fill="none" stroke="#800000" stroke-width="1.2" stroke-linecap="butt" stroke-linejoin="miter"/>
<circle cx="84.1" cy="87.9" r="2.45" fill="#000080"/>
<circle cx="462.5" cy="57.85" r="2.45" fill="#000080"/>
<circle cx="666.6" cy="57.85" r="2.45" fill="#000080"/>
<circle cx="666.6" cy="77.85" r="2.45" fill="#000080"/>
<circle cx="873.2" cy="77.9" r="2.45" fill="#000080"/>
<circle cx="873.2" cy="107.6" r="2.45" fill="#000080"/>
<circle cx="895.5" cy="77.9" r="2.45" fill="#000080"/>
<circle cx="895.5" cy="107.6" r="2.45" fill="#000080"/>
<circle cx="915.4" cy="77.9" r="2.45" fill="#000080"/>
<circle cx="873.2" cy="147.6" r="2.45" fill="#000080"/>
<circle cx="873.2" cy="177.3" r="2.45" fill="#000080"/>
<circle cx="895.5" cy="147.6" r="2.45" fill="#000080"/>
<circle cx="895.5" cy="177.3" r="2.45" fill="#000080"/>
<circle cx="915.4" cy="147.6" r="2.45" fill="#000080"/>
<circle cx="935.4" cy="147.6" r="2.45" fill="#000080"/>
<circle cx="133.75" cy="386.25" r="2.45" fill="#000080"/>
<circle cx="193.75" cy="411.1" r="2.45" fill="#000080"/>
<circle cx="203.75" cy="421.1" r="2.45" fill="#000080"/>
<circle cx="238.25" cy="431" r="2.45" fill="#000080"/>
<circle cx="188.75" cy="550.5" r="2.45" fill="#000080"/>
<circle cx="238.25" cy="550.5" r="2.45" fill="#000080"/>
<circle cx="479.6" cy="212.5" r="2.45" fill="#000080"/>
<circle cx="492.5" cy="301.6" r="2.45" fill="#000080"/>
<circle cx="514.5" cy="301.6" r="2.45" fill="#000080"/>
<circle cx="537" cy="301.6" r="2.45" fill="#000080"/>
<circle cx="479.6" cy="301.6" r="2.45" fill="#000080"/>
<circle cx="479.6" cy="311.6" r="2.45" fill="#000080"/>
<circle cx="514.5" cy="327" r="2.45" fill="#000080"/>
<circle cx="537" cy="327" r="2.45" fill="#000080"/>
<circle cx="607" cy="281.6" r="2.45" fill="#000080"/>
<circle cx="607" cy="301.6" r="2.45" fill="#000080"/>
<circle cx="552" cy="351.6" r="2.45" fill="#000080"/>
<circle cx="552" cy="381.3" r="2.45" fill="#000080"/>
<circle cx="581.9" cy="351.6" r="2.45" fill="#000080"/>
<circle cx="581.9" cy="381.3" r="2.45" fill="#000080"/>
<circle cx="606.9" cy="351.6" r="2.45" fill="#000080"/>
<circle cx="606.9" cy="381.3" r="2.45" fill="#000080"/>
<circle cx="965" cy="242" r="2.45" fill="#000080"/>
<circle cx="1059.7" cy="466" r="2.45" fill="#000080"/>
<circle cx="1024.8" cy="505.6" r="2.45" fill="#000080"/>
<circle cx="382.5" cy="641" r="2.45" fill="#000080"/>
<circle cx="412.3" cy="641" r="2.45" fill="#000080"/>
</svg>
</body></html>
